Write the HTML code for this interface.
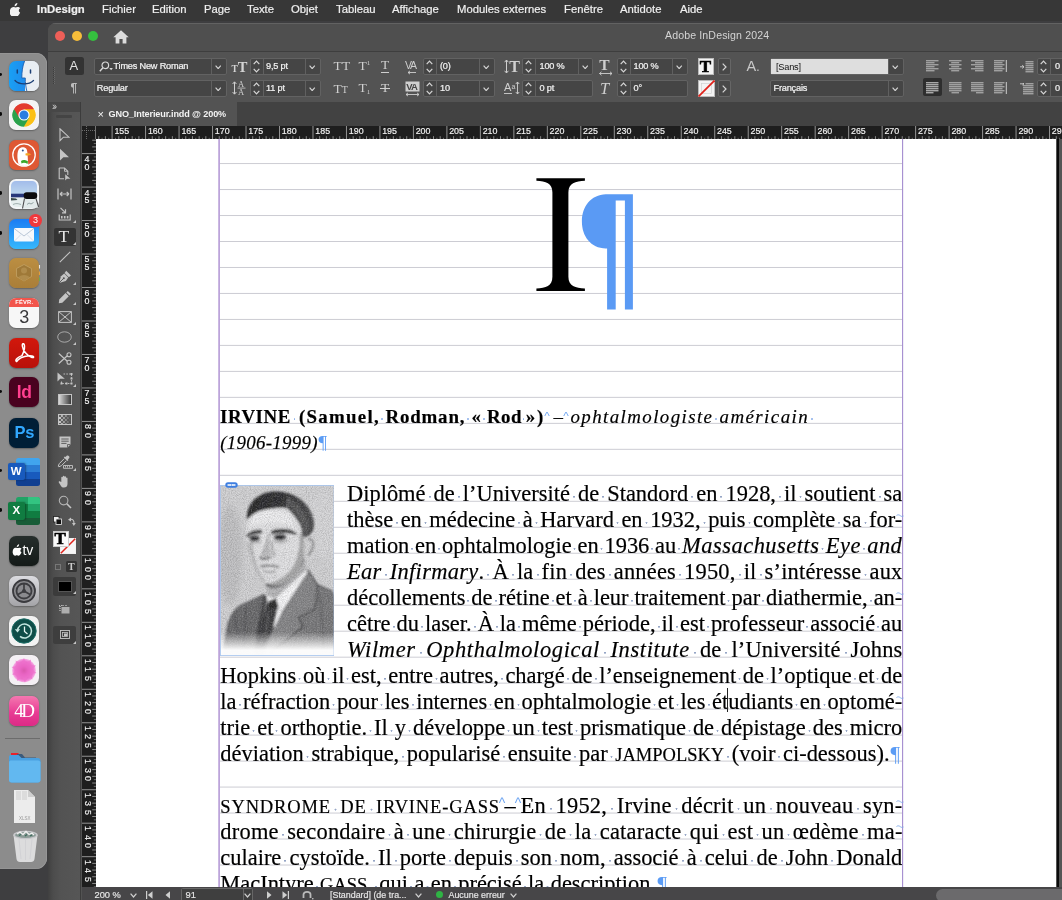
<!DOCTYPE html>
<html lang="fr"><head><meta charset="utf-8"><title>InDesign</title>
<style>
*{box-sizing:border-box;margin:0;padding:0}
html,body{width:1062px;height:900px;overflow:hidden;background:#3e3e40;font-family:"Liberation Sans",sans-serif;}
body{position:relative}
.abs{position:absolute}
/* menubar */
#menubar{position:absolute;left:0;top:0;width:1062px;height:20.6px;background:#373737;color:#f0f0f0;font-size:11.3px;}
#menubar span{position:absolute;top:2.5px;white-space:nowrap;line-height:13px;-webkit-text-stroke:0.2px #f0f0f0}
/* window */
#win{position:absolute;left:48px;top:22.5px;width:1014px;height:878px;background:#535353;border-top-left-radius:8px;overflow:hidden}
#titlebar{position:absolute;left:0;top:0;width:100%;height:29px;background:#4f4f4f;border-bottom:1px solid #3e3e3e;box-shadow:0 0.8px 0 #6a6a6a inset}
.tl{position:absolute;top:7.8px;width:10px;height:10px;border-radius:50%}
#ctrl{position:absolute;left:0;top:29px;width:100%;height:50px;background:#535353}
.fld{position:absolute;height:17px;background:#454545;border:1px solid #626262;border-radius:2px;color:#f2f2f2;font-size:9.2px;line-height:15px;white-space:nowrap;letter-spacing:-0.2px}
.fld i{position:absolute;top:0;width:1px;height:15px;background:#606060}
.fld b{position:absolute;font-weight:normal;top:0.5px;-webkit-text-stroke:0.22px #f2f2f2}
.ui{position:absolute;color:#d8d8d8;white-space:nowrap}
#tabbar{position:absolute;left:34px;top:79px;width:980px;height:24.5px;background:#424242}
#tab{position:absolute;left:0;top:0;width:155px;height:24.5px;background:#535353;color:#f4f4f4;font-weight:bold;font-size:9.1px;line-height:24.5px;letter-spacing:-0.12px}
#tools{position:absolute;left:0;top:79px;width:33px;height:799px;background:linear-gradient(90deg,#404040 0,#4c4c4c 5px,#535353 13px,#565656 100%);border-right:1px solid #3c3c3c}
#toolshead{position:absolute;left:0;top:0;width:32px;height:10px;background:#474747}
/* rulers */
#hr{position:absolute;left:82px;top:125.7px;width:980px;height:13.3px;background:#1e1e1e;overflow:hidden}
#vr{position:absolute;left:82px;top:139px;width:14px;height:748px;background:#1e1e1e;overflow:hidden}
.rl{position:absolute;color:#f4f4f4;font-size:8.9px;line-height:9px;white-space:nowrap;-webkit-text-stroke:0.15px #f4f4f4}
/* page */
#page{position:absolute;left:96px;top:139px;width:960px;height:748px;background:#fff;overflow:hidden}
#status{position:absolute;left:82px;top:886.6px;width:980px;height:14px;background:#474648;color:#e6e6e6;font-size:9.3px;-webkit-text-stroke:0.18px #e6e6e6}
#dock{position:absolute;left:-12px;top:53px;width:58.9px;height:816px;background:#8c8c8c;border-radius:11px;box-shadow:0 0 0 0.6px #9c9c9c inset}
.di{position:absolute;left:9.3px;width:30px;height:30px;box-shadow:0 0.5px 1.5px rgba(0,0,0,0.3)}
#menubar,#dock,#win,#hr,#vr,#page,#status{will-change:transform}

</style></head>
<body>
<div id="menubar">
<svg class="abs" style="left:10px;top:2.5px" width="10.8" height="13.5" viewBox="0 0 12 15"><path fill="#f2f2f2" d="M8.2 0c.1 1-.3 1.900-.8 2.500-.6.700-1.500 1.200-2.300 1.100-.1-.9.300-1.900.8-2.400C6.500.5 7.500 0 8.200 0zM11.300 10.600c-.4 1-.6 1.400-1.200 2.300-.7 1.200-1.800 2.100-2.700 2.100-.9 0-1.200-.6-2.300-.6-1.200 0-1.500.6-2.300.6-.9 0-1.900-1-2.600-2.200C-.9 10.400-.3 6.400 2 5c.8-.5 1.700-.7 2.400-.5.800.2 1.300.5 1.800.5.500 0 1.200-.4 2.200-.6 1-.1 2.300.4 3 1.400-2.300 1.400-1.900 4.100-.1 4.800z"/></svg>
<span style="left:37px;font-weight:bold;font-size:11.3px">InDesign</span>
<span style="left:102px">Fichier</span>
<span style="left:152px">Edition</span>
<span style="left:204px">Page</span>
<span style="left:247px">Texte</span>
<span style="left:291px">Objet</span>
<span style="left:336px">Tableau</span>
<span style="left:392px">Affichage</span>
<span style="left:457px">Modules externes</span>
<span style="left:564px">Fenêtre</span>
<span style="left:620px">Antidote</span>
<span style="left:680px">Aide</span>
</div>
<div id="dock"><div class="abs" style="left:12px;top:-53px;width:0;height:0">
<div class="di" style="top:60.5px;background:linear-gradient(90deg,#19a0f4 0%,#1e8cee 52%,#e9eef3 52%,#dfe6ee 100%);border-radius:7px;;overflow:hidden"><svg width="30" height="30" viewBox="0 0 30 30" class="abs" style="left:0;top:0"><path d="M15.600 0 C13.500 5 12.800 11 12.800 17 H16.300 C16.300 22 16.800 26 17.800 30 H30 V0 Z" fill="#e9eef3"/><path d="M15.600 0 C13.500 5 12.800 11 12.800 17 H16.300 C16.300 22 16.800 26 17.800 30" fill="none" stroke="#1b5fae" stroke-width="0.9"/><path d="M8.300 9 V12 M21.500 9 V12" stroke="#1c3f74" stroke-width="1.500" stroke-linecap="round"/><path d="M6 19.500 C10 24 20 24 24.500 19.500" fill="none" stroke="#1c3f74" stroke-width="1.300" stroke-linecap="round"/></svg></div>
<div class="abs" style="left:-1.5px;top:72.8px;width:3.8px;height:3.6px;border-radius:50%;background:#0a0a0a"></div>
<div class="di" style="top:99.7px;background:#f4f4f4;border-radius:7px;"><svg width="30" height="30" viewBox="0 0 30 30" class="abs" style="left:0;top:0"><circle cx="15" cy="15" r="11.500" fill="#fff"/><path d="M15 15 L5.040 9.250 A11.500 11.500 0 0 1 24.960 9.250 Z" fill="#e33b2e"/><path d="M15 15 L24.960 9.250 A11.500 11.500 0 0 1 15 26.500 Z" fill="#fbc116"/><path d="M15 15 L15 26.500 A11.500 11.500 0 0 1 5.040 9.250 Z" fill="#2ba24c"/><path d="M15 9.250 H24.960 A11.500 11.500 0 0 0 5.040 9.250 L10 17.800 Z" fill="#e33b2e"/><path d="M19.980 17.880 L15 26.500 A11.500 11.500 0 0 0 24.960 9.250 H15 Z" fill="#fbc116"/><path d="M10.020 17.880 L5.040 9.250 A11.500 11.500 0 0 0 15 26.500 L19.980 17.880 Z" fill="#2ba24c"/><circle cx="15" cy="15" r="5.600" fill="#fff"/><circle cx="15" cy="15" r="4.500" fill="#2a7de1"/></svg></div>
<div class="abs" style="left:-1.5px;top:112.1px;width:3.8px;height:3.6px;border-radius:50%;background:#0a0a0a"></div>
<div class="di" style="top:140.0px;background:#de5833;border-radius:7px;"><svg width="30" height="30" viewBox="0 0 30 30" class="abs" style="left:0;top:0"><circle cx="15" cy="15" r="11.200" fill="none" stroke="#fff" stroke-width="1.300"/><path d="M9.500 24 C8 18 8 12 10 9 C12 6.500 16 6.500 17.500 9 C19 12 18.500 20 19.500 25 C16 26.500 12.500 26.300 9.500 24 Z" fill="#fff"/><path d="M16.500 13.500 C19 13 21.500 13.800 22 14.500 C20.500 15.500 18 15.800 16.500 15.300 Z" fill="#f5a623"/><path d="M12 21 C14 19.500 17 20 19 21.500 L18.500 24 C16.500 22.500 14 22.500 12.500 23.500 Z" fill="#3ca82b"/><circle cx="13.800" cy="10.500" r="1" fill="#2d4f8e"/></svg></div>
<div class="di" style="top:179.0px;background:#f4f6f8;border-radius:7px;"><svg width="30" height="30" viewBox="0 0 30 30" class="abs" style="left:0;top:0"><defs><linearGradient id="sky" x1="0" y1="0" x2="0" y2="1"><stop offset="0" stop-color="#a2bcea"/><stop offset="1" stop-color="#bcd6ee"/></linearGradient><clipPath id="pvc"><rect x="2" y="2" width="26" height="26" rx="4.800"/></clipPath></defs><g clip-path="url(#pvc)"><rect x="2" y="2" width="26" height="13" fill="url(#sky)"/><rect x="2" y="14.700" width="26" height="4" fill="#27377a"/><rect x="2" y="18.500" width="26" height="10" fill="#e6eeee"/><path d="M2 19 L7 19.500 L8.500 21 L2 21.500 Z" fill="#3a4a4a"/><path d="M4 25.500 C7 24 9 24.500 12 25.500" stroke="#9aa8a8" stroke-width="0.900" fill="none"/></g><path d="M15.500 19 L13.300 29.700 L29.800 28.500 L27.200 19 Z" fill="#e2eaea"/><path d="M15.500 19.500 L13.500 29.500 M27 19.500 L29.600 28" stroke="#4a4a4c" stroke-width="1.100" fill="none"/><rect x="14.700" y="13.300" width="13.500" height="6.600" rx="3" fill="#0c0c0e"/><path d="M18 25.500 l2 -1.500 l2 1 l2.500 -1.500" stroke="#8a9a9a" stroke-width="0.900" fill="none"/></svg></div>
<div class="abs" style="left:-1.5px;top:191.2px;width:3.8px;height:3.6px;border-radius:50%;background:#0a0a0a"></div>
<div class="di" style="top:218.5px;background:linear-gradient(180deg,#1b7cf3 0%,#36b8fc 100%);border-radius:7px;"><svg width="30" height="30" viewBox="0 0 30 30" class="abs" style="left:0;top:0"><rect x="5" y="9" width="20" height="13.500" rx="1.500" fill="#f6f8fb"/><path d="M5.500 9.800 L15 17 L24.500 9.800" fill="none" stroke="#b9c6d6" stroke-width="1"/><path d="M5.500 22 L12 15.500 M24.500 22 L18 15.500" stroke="#cdd7e3" stroke-width="0.8"/></svg></div>
<div class="abs" style="left:29.200px;top:213.900px;width:12.800px;height:12.800px;border-radius:50%;background:#f0383c;color:#fff;font-size:9px;line-height:12.800px;text-align:center">3</div>
<div class="abs" style="left:-1.5px;top:231.2px;width:3.8px;height:3.6px;border-radius:50%;background:#0a0a0a"></div>
<div class="di" style="top:258.0px;background:linear-gradient(180deg,#bb8e42,#aa7e38);border-radius:7px;"><svg width="32" height="30" viewBox="0 0 32 30" class="abs" style="left:0;top:0;overflow:visible"><path d="M15 6.500 L22.500 10.500 V18.500 L15 23 L7.500 18.500 V10.500 Z" fill="#9d7838" stroke="#c4a468" stroke-width="0.8" opacity="0.9"/><circle cx="15" cy="12.500" r="3" fill="#b08c4c"/><path d="M9.500 19.500 C10.500 16 19.500 16 20.500 19.500 L15 23 Z" fill="#b08c4c"/><path d="M30.500 7 v3.500" stroke="#e8e8e8" stroke-width="1.100"/><path d="M30.500 13.500 v3.500" stroke="#e0a040" stroke-width="1.100"/><path d="M30.500 19.500 v3.500" stroke="#70a850" stroke-width="1.100"/></svg></div>
<div class="di" style="top:298.4px;background:#f7f7f7;border-radius:7px;"><div class="abs" style="left:0;top:0;width:30px;height:9px;background:#f2554c;border-radius:7px 7px 0 0;color:#fff;font-size:5.800px;font-weight:bold;line-height:9.500px;text-align:center;letter-spacing:0.2px">FÉVR.</div><div class="abs" style="left:0;top:8.500px;width:30px;color:#3a3a3c;font-size:18px;line-height:21px;text-align:center">3</div></div>
<div class="di" style="top:338.0px;background:linear-gradient(180deg,#d2180c,#b8100a);border-radius:7px;"><svg width="30" height="30" viewBox="0 0 30 30" class="abs" style="left:0;top:0"><path d="M7.200 23.200 C5.800 21.500 9.500 18.800 13 17.600 C15.200 13 16.300 9 15.200 6.500 C14.500 5 13 5.600 13.300 7.800 C14 12.300 18 17 22.500 19.300 C24.800 20.400 25.600 18.300 23 17.900 C19 17.300 12 18.800 9.200 21.800 C8.300 22.800 7.800 23.900 7.200 23.200 Z" fill="none" stroke="#fff" stroke-width="1.500" stroke-linejoin="round"/></svg></div>
<div class="di" style="top:377.3px;background:#49021f;border-radius:7px;"><div class="abs" style="left:0;top:0;width:30px;line-height:30px;text-align:center;color:#ff3f8f;font-weight:bold;font-size:17.500px;letter-spacing:-0.3px">Id</div></div>
<div class="abs" style="left:-1.5px;top:389.6px;width:3.8px;height:3.6px;border-radius:50%;background:#0a0a0a"></div>
<div class="di" style="top:417.5px;background:#001e36;border-radius:7px;"><div class="abs" style="left:0;top:0;width:30px;line-height:29px;text-align:center;color:#31a8ff;font-weight:bold;font-size:16.500px;letter-spacing:-0.3px">Ps</div></div>
<div class="abs" style="left:16px;top:457.500px;width:24px;height:28px;border-radius:2.500px;overflow:hidden;background:linear-gradient(180deg,#41a5ee 0 25%,#2b7cd3 25% 50%,#185abd 50% 75%,#103f91 75% 100%)"></div>
<div class="abs" style="left:7.800px;top:462.800px;width:17px;height:17.500px;border-radius:2px;background:#185abd;color:#fff;font-weight:bold;font-size:11.500px;line-height:17.500px;text-align:center;box-shadow:1px 0 2px rgba(0,0,0,0.35)">W</div>
<div class="abs" style="left:-1.5px;top:468.9px;width:3.8px;height:3.6px;border-radius:50%;background:#0a0a0a"></div>
<div class="abs" style="left:16px;top:497px;width:24px;height:28px;border-radius:2.500px;overflow:hidden;background:linear-gradient(180deg,#21a366 0 25%,#21a366 25% 50%,#107c41 50% 75%,#185c37 75% 100%)"><div class="abs" style="left:12px;top:0;width:12px;height:7px;background:#33c481"></div><div class="abs" style="left:12px;top:7px;width:12px;height:7px;background:#21a366"></div><div class="abs" style="left:0;top:7px;width:12px;height:7px;background:#107c41"></div></div>
<div class="abs" style="left:7.800px;top:502.300px;width:17px;height:17.500px;border-radius:2px;background:#107c41;color:#fff;font-weight:bold;font-size:11.500px;line-height:17.500px;text-align:center;box-shadow:1px 0 2px rgba(0,0,0,0.35)">X</div>
<div class="abs" style="left:-1.5px;top:508.2px;width:3.8px;height:3.6px;border-radius:50%;background:#0a0a0a"></div>
<div class="di" style="top:536.0px;background:linear-gradient(180deg,#262e2c,#141a18);border-radius:7px;"><svg width="30" height="30" viewBox="0 0 30 30" class="abs" style="left:0;top:0"><g transform="translate(3.900,8.300) scale(0.760)"><path fill="#fff" d="M8.200 0c.1 1-.3 1.900-.8 2.500-.6.700-1.500 1.200-2.300 1.100-.1-.9.300-1.900.8-2.400C6.500.5 7.500 0 8.200 0zM11.300 10.600c-.4 1-.6 1.400-1.200 2.300-.7 1.200-1.800 2.100-2.700 2.100-.9 0-1.200-.6-2.300-.6-1.200 0-1.500.6-2.300.6-.9 0-1.900-1-2.600-2.200C-.9 10.400-.3 6.400 2 5c.8-.5 1.700-.7 2.400-.5.800.2 1.300.5 1.800.5.500 0 1.200-.4 2.200-.6 1-.1 2.300.4 3 1.400-2.300 1.400-1.900 4.100-.1 4.800z"/></g><text x="13.600" y="19.400" font-family="Liberation Sans" font-size="14" fill="#fff" letter-spacing="-0.2">tv</text></svg></div>
<div class="di" style="top:575.6px;background:linear-gradient(180deg,#dcdce0,#a4a4a8);border-radius:7px;"><svg width="30" height="30" viewBox="0 0 30 30" class="abs" style="left:0;top:0"><circle cx="15" cy="15" r="11" fill="#8a8a8e" stroke="#3a3a3e" stroke-width="1.800"/><circle cx="15" cy="15" r="7.500" fill="none" stroke="#3c3c40" stroke-width="1.800"/><path d="M15 15 L15 7.500 M15 15 L8.500 18.800 M15 15 L21.500 18.800" stroke="#3c3c40" stroke-width="1.700"/><circle cx="15" cy="15" r="2" fill="#3c3c40"/></svg></div>
<div class="di" style="top:615.6px;background:#f2f2f2;border-radius:7px;"><svg width="30" height="30" viewBox="0 0 30 30" class="abs" style="left:0;top:0"><circle cx="15" cy="15" r="12.200" fill="#0f4d48"/><circle cx="15" cy="15" r="12.200" fill="none" stroke="#1d6f68" stroke-width="1"/><path d="M8.500 15 A7 7 0 1 1 11 20.400" fill="none" stroke="#c4e6e0" stroke-width="1.500"/><path d="M5.800 13.300 L8.500 16.500 L11.200 13.300 Z" fill="#c4e6e0"/><path d="M15.500 10.500 V15.500 L18.500 18" fill="none" stroke="#e8f6f2" stroke-width="1.300"/></svg></div>
<div class="di" style="top:655.0px;background:#f4f0f4;border-radius:7px;"><svg width="30" height="30" viewBox="0 0 30 30" class="abs" style="left:0;top:0"><defs><radialGradient id="fl"><stop offset="0" stop-color="#a82068"/><stop offset="0.350" stop-color="#dc48b0"/><stop offset="0.800" stop-color="#ee78d0"/><stop offset="1" stop-color="#f6b0e6"/></radialGradient></defs><circle cx="15" cy="15.500" r="11.800" fill="url(#fl)"/><path d="M15 3 L17 8 L22 4.500 L21.500 10 L27 10.500 L23 14.500 L27.500 18 L22 19 L23.500 24.500 L18.500 22 L16 27.500 L13 22.500 L8 26 L8.500 20.500 L3 19.500 L7 15.500 L2.500 12 L8 11 L6.500 5.500 L12 8 Z" fill="#ee70cc" opacity="0.7"/></svg></div>
<div class="di" style="top:695.6px;background:linear-gradient(180deg,#f478b0 0%,#e83c94 55%,#dc2a86 100%);border-radius:7px;"><div class="abs" style="left:0;top:0;width:30px;line-height:29px;text-align:center;color:#fff;font-family:'Liberation Serif',serif;font-size:19px;letter-spacing:-2.500px;text-indent:-2px">4D</div></div>
<div class="abs" style="left:4.500px;top:738px;width:35px;height:1px;background:#6c6c6c"></div>
<svg class="abs" style="left:7.500px;top:748px" width="34" height="37" viewBox="0 0 34 37"><path d="M3 5 H10 L13 8 H3 Z" fill="#e8202a"/><path d="M9 6 L14 6 L17 9.500 H28 V12 H9 Z" fill="#3c5a7a"/><path d="M1 9 C1 7.500 2 7 3 7 H10.500 L13.500 10 H30 C31.500 10 32.500 11 32.500 12.500 V32 C32.500 33.500 31.500 34.500 30 34.500 H3.500 C2 34.500 1 33.500 1 32 Z" fill="#4aa0e0"/><path d="M1 14.500 C1 13 2 12.500 3.500 12.500 H30 C31.500 12.500 32.500 13.500 32.500 14.500 V32 C32.500 33.500 31.500 34.500 30 34.500 H3.500 C2 34.500 1 33.500 1 32 Z" fill="#62b8f0"/></svg>
<svg class="abs" style="left:12.500px;top:788.500px" width="23" height="35" viewBox="0 0 23 35"><path d="M1 1 H15 L22 8 V34 H1 Z" fill="#ececec"/><path d="M15 1 V8 H22 Z" fill="#cfcfcf"/><path d="M3 2 h5 v9 h-5z M9 2 h5 v9 h-5z" fill="#dcdcdc"/><text x="6" y="30.500" font-family="Liberation Sans" font-size="4.500" fill="#9a9a9a">XLSX</text></svg>
<svg class="abs" style="left:10.500px;top:828px" width="29" height="35" viewBox="0 0 29 35"><path d="M2.500 7 L5.500 31 C5.800 33 7 34 9 34 H20 C22 34 23.200 33 23.500 31 L26.500 7 Z" fill="#e4e4e6" opacity="0.900"/><ellipse cx="14.500" cy="7" rx="12.300" ry="4.200" fill="#c8c8cc"/><ellipse cx="14.500" cy="7" rx="10.500" ry="3" fill="#8a9a96"/><path d="M6 6 l3 -2 l3 2.500 l3 -3 l3 3 l3 -1.500 l2 2" stroke="#f0f0f0" stroke-width="1.300" fill="none"/><path d="M8 7.500 l2 -1 M14 8 l2 -1.500 M19 8 l2 -1" stroke="#3a6a5a" stroke-width="1.200"/><path d="M8 11 L10 31 M14.500 11.500 V32 M21 11 L19 31" stroke="#d0d0d4" stroke-width="0.900"/></svg>
</div></div>
<div id="win">
<div id="titlebar">
<div class="tl" style="left:7.2px;background:#ee5f58"></div>
<div class="tl" style="left:23.8px;background:#f6bd3a"></div>
<div class="tl" style="left:40.3px;background:#35c03f"></div>
<svg class="abs" style="left:65px;top:7.0px" width="16" height="14" viewBox="0 0 16 14"><path fill="#dcdcdc" d="M8 0.3 L0.3 7.2 H2.6 V13.5 H6.4 V9 H9.6 V13.5 H13.4 V7.2 H15.7 Z"/></svg>
<div class="ui" style="left:617px;top:5.5px;font-size:10.6px;line-height:13px;color:#d4d4d4;letter-spacing:0.12px">Adobe InDesign 2024</div>
</div>
<div id="ctrl"></div>
<div class="abs" style="left:4.5px;top:43.5px;width:2px;height:17px;border-left:1px dotted #3d3d3d;border-right:1px dotted #6a6a6a"></div>
<div class="abs" style="left:17px;top:34.0px;width:18.5px;height:18px;background:#333;border-radius:2.5px"></div>
<div class="ui" style="left:21.599999999999994px;top:36.0px;font-size:13px;line-height:14px;color:#e0e0e0">A</div>
<div class="ui" style="left:22.5px;top:57.5px;font-size:12px;line-height:14px;color:#bdbdbd;font-weight:bold">¶</div>
<div class="fld" style="left:45.5px;top:34.5px;width:133.0px;background:#454545;color:#f2f2f2"><i style="left:116.5px"></i><b style="left:19.0px">Times New Roman</b><svg class="abs" style="left:4px;top:2.5px" width="15" height="11" viewBox="0 0 15 11"><circle cx="6.3" cy="4.3" r="3.3" fill="none" stroke="#d8d8d8" stroke-width="1.2"/><path d="M3.9 6.8 L0.8 10.2" stroke="#d8d8d8" stroke-width="1.4" fill="none"/><path d="M10.3 7 h3.6 l-1.8 2.2z" fill="#d8d8d8"/></svg></div>
<svg class="abs" style="left:167.3px;top:41.7px" width="6.4" height="4.6" viewBox="0 0 6.4 4.6"><path d="M0.6 0.6 L3.2 3.6 L5.800000000000001 0.6" fill="none" stroke="#d6d6d6" stroke-width="1.15"/></svg>
<div class="fld" style="left:45.5px;top:56.5px;width:133.0px;background:#454545;color:#f2f2f2"><i style="left:116.5px"></i><b style="left:2.3px">Regular</b></div>
<svg class="abs" style="left:167.3px;top:63.7px" width="6.4" height="4.6" viewBox="0 0 6.4 4.6"><path d="M0.6 0.6 L3.2 3.6 L5.800000000000001 0.6" fill="none" stroke="#d6d6d6" stroke-width="1.15"/></svg>
<div class="ui" style="left:183.5px;top:34.5px;font-family:'Liberation Serif',serif;font-weight:bold;color:#d4d4d4;line-height:18px"><span style="font-size:9.500px">T</span><span style="font-size:14.500px">T</span></div>
<div class="fld" style="left:202.0px;top:34.5px;width:70.5px;background:#454545;color:#f2f2f2"><i style="left:12px"></i><i style="left:54.0px"></i><b style="left:15.0px">9,5 pt</b></div>
<svg class="abs" style="left:205.0px;top:36.5px" width="7" height="13" viewBox="0 0 7 13"><path d="M0.7 4.2 L3.5 1.2 L6.3 4.2 M0.7 8.8 L3.5 11.8 L6.3 8.8" fill="none" stroke="#d6d6d6" stroke-width="1.2"/></svg>
<svg class="abs" style="left:261.3px;top:41.7px" width="6.4" height="4.6" viewBox="0 0 6.4 4.6"><path d="M0.6 0.6 L3.2 3.6 L5.800000000000001 0.6" fill="none" stroke="#d6d6d6" stroke-width="1.15"/></svg>
<svg class="abs" style="left:184px;top:57.0px" width="15" height="16" viewBox="0 0 15 16"><path d="M2.5 2 V14 M0.6 4 L2.5 1.8 L4.4 4 M0.6 12 L2.5 14.2 L4.4 12" fill="none" stroke="#cfcfcf" stroke-width="1"/><text x="6" y="7.3" font-family="Liberation Serif" font-size="8.5" fill="#cfcfcf">A</text><text x="6" y="15.2" font-family="Liberation Serif" font-size="8.5" fill="#cfcfcf">A</text><path d="M5.5 8.1 H13.5" stroke="#cfcfcf" stroke-width="0.8"/></svg>
<div class="fld" style="left:202.0px;top:56.5px;width:70.5px;background:#454545;color:#f2f2f2"><i style="left:12px"></i><i style="left:54.0px"></i><b style="left:15.0px">11 pt</b></div>
<svg class="abs" style="left:205.0px;top:58.5px" width="7" height="13" viewBox="0 0 7 13"><path d="M0.7 4.2 L3.5 1.2 L6.3 4.2 M0.7 8.8 L3.5 11.8 L6.3 8.8" fill="none" stroke="#d6d6d6" stroke-width="1.2"/></svg>
<svg class="abs" style="left:261.3px;top:63.7px" width="6.4" height="4.6" viewBox="0 0 6.4 4.6"><path d="M0.6 0.6 L3.2 3.6 L5.800000000000001 0.6" fill="none" stroke="#d6d6d6" stroke-width="1.15"/></svg>
<div class="ui" style="left:285.5px;top:35.0px;font-family:'Liberation Serif',serif;color:#cfcfcf;line-height:16px;font-size:13.5px;letter-spacing:0.3px">TT</div>
<div class="ui" style="left:310.5px;top:35.0px;font-family:'Liberation Serif',serif;color:#cfcfcf;line-height:16px;font-size:13.5px">T<span style="font-size:7px;position:relative;top:-5px">1</span></div>
<div class="ui" style="left:333px;top:35.0px;font-family:'Liberation Serif',serif;color:#cfcfcf;line-height:16px;font-size:13.5px;border-bottom:1px solid #cfcfcf;line-height:14px">T</div>
<div class="ui" style="left:285.5px;top:57.0px;font-family:'Liberation Serif',serif;color:#cfcfcf;line-height:16px"><span style="font-size:13.5px">T</span><span style="font-size:10px">T</span></div>
<div class="ui" style="left:310.5px;top:57.0px;font-family:'Liberation Serif',serif;color:#cfcfcf;line-height:16px;font-size:13.5px">T<span style="font-size:7px;position:relative;top:2px">1</span></div>
<div class="ui" style="left:333px;top:57.0px;font-family:'Liberation Serif',serif;color:#cfcfcf;line-height:16px;font-size:13.5px">T</div>
<div class="abs" style="left:332px;top:65.0px;width:10px;height:1px;background:#cfcfcf"></div>
<svg class="abs" style="left:356.5px;top:35.5px" width="16" height="16" viewBox="0 0 16 16"><text x="0" y="10" font-family="Liberation Sans" font-size="10.5" fill="#cfcfcf" letter-spacing="-1.3">VA</text><path d="M3 13.5 H11 M3 13.5 l2 -1.6 M3 13.5 l2 1.6" stroke="#cfcfcf" stroke-width="0.9" fill="none"/></svg>
<div class="fld" style="left:374.5px;top:34.5px;width:72.1px;background:#454545;color:#f2f2f2"><i style="left:12px"></i><i style="left:55.6px"></i><b style="left:16.5px">(0)</b></div>
<svg class="abs" style="left:377.5px;top:36.5px" width="7" height="13" viewBox="0 0 7 13"><path d="M0.7 4.2 L3.5 1.2 L6.3 4.2 M0.7 8.8 L3.5 11.8 L6.3 8.8" fill="none" stroke="#d6d6d6" stroke-width="1.2"/></svg>
<svg class="abs" style="left:435.4px;top:41.7px" width="6.4" height="4.6" viewBox="0 0 6.4 4.6"><path d="M0.6 0.6 L3.2 3.6 L5.800000000000001 0.6" fill="none" stroke="#d6d6d6" stroke-width="1.15"/></svg>
<svg class="abs" style="left:356.5px;top:57.5px" width="16" height="16" viewBox="0 0 16 16"><rect x="0.5" y="0.5" width="14" height="10" fill="#cfcfcf"/><text x="1.2" y="9.3" font-family="Liberation Sans" font-weight="bold" font-size="9.5" fill="#454545" letter-spacing="-0.8">VA</text><path d="M1 13.5 H14 M1 13.5 l2 -1.6 M1 13.5 l2 1.6 M14 13.5 l-2 -1.6 M14 13.5 l-2 1.6" stroke="#cfcfcf" stroke-width="0.9" fill="none"/></svg>
<div class="fld" style="left:374.5px;top:56.5px;width:72.1px;background:#454545;color:#f2f2f2"><i style="left:12px"></i><i style="left:55.6px"></i><b style="left:16.5px">10</b></div>
<svg class="abs" style="left:377.5px;top:58.5px" width="7" height="13" viewBox="0 0 7 13"><path d="M0.7 4.2 L3.5 1.2 L6.3 4.2 M0.7 8.8 L3.5 11.8 L6.3 8.8" fill="none" stroke="#d6d6d6" stroke-width="1.2"/></svg>
<svg class="abs" style="left:435.4px;top:63.7px" width="6.4" height="4.6" viewBox="0 0 6.4 4.6"><path d="M0.6 0.6 L3.2 3.6 L5.800000000000001 0.6" fill="none" stroke="#d6d6d6" stroke-width="1.15"/></svg>
<svg class="abs" style="left:456px;top:35.0px" width="17" height="17" viewBox="0 0 17 17"><path d="M2.5 2 V15 M0.6 4.2 L2.5 2 L4.4 4.2 M0.6 12.8 L2.5 15 L4.4 12.8" fill="none" stroke="#cfcfcf" stroke-width="1"/><text x="5.2" y="14" font-family="Liberation Serif" font-weight="bold" font-size="16" fill="#cfcfcf">T</text></svg>
<div class="fld" style="left:473.8px;top:34.5px;width:71.5px;background:#454545;color:#f2f2f2"><i style="left:12px"></i><i style="left:55.0px"></i><b style="left:16.7px">100 %</b></div>
<svg class="abs" style="left:476.8px;top:36.5px" width="7" height="13" viewBox="0 0 7 13"><path d="M0.7 4.2 L3.5 1.2 L6.3 4.2 M0.7 8.8 L3.5 11.8 L6.3 8.8" fill="none" stroke="#d6d6d6" stroke-width="1.2"/></svg>
<svg class="abs" style="left:534.1px;top:41.7px" width="6.4" height="4.6" viewBox="0 0 6.4 4.6"><path d="M0.6 0.6 L3.2 3.6 L5.800000000000001 0.6" fill="none" stroke="#d6d6d6" stroke-width="1.15"/></svg>
<svg class="abs" style="left:456px;top:57.0px" width="17" height="17" viewBox="0 0 17 17"><text x="0" y="11" font-family="Liberation Sans" font-size="11" fill="#cfcfcf">A</text><path d="M0 13.5 H8" stroke="#cfcfcf" stroke-width="0.9"/><text x="7.6" y="9" font-family="Liberation Sans" font-size="7" fill="#cfcfcf">a</text><path d="M13.5 2 V14 M11.8 4 L13.5 2 L15.2 4 M11.8 12 L13.5 14 L15.2 12" fill="none" stroke="#cfcfcf" stroke-width="0.9"/></svg>
<div class="fld" style="left:473.8px;top:56.5px;width:71.5px;background:#454545;color:#f2f2f2"><i style="left:12px"></i><b style="left:16.7px">0 pt</b></div>
<svg class="abs" style="left:476.8px;top:58.5px" width="7" height="13" viewBox="0 0 7 13"><path d="M0.7 4.2 L3.5 1.2 L6.3 4.2 M0.7 8.8 L3.5 11.8 L6.3 8.8" fill="none" stroke="#d6d6d6" stroke-width="1.2"/></svg>
<svg class="abs" style="left:549.5px;top:34.5px" width="16" height="18" viewBox="0 0 16 18"><text x="1.2" y="12" font-family="Liberation Serif" font-weight="bold" font-size="15.5" fill="#cfcfcf">T</text><path d="M1.5 15.5 H14 M1.5 15.5 l2 -1.7 M1.5 15.5 l2 1.7 M14 15.5 l-2 -1.7 M14 15.5 l-2 1.7" stroke="#cfcfcf" stroke-width="0.9" fill="none"/></svg>
<div class="fld" style="left:568.5px;top:34.5px;width:71.0px;background:#454545;color:#f2f2f2"><i style="left:12px"></i><i style="left:54.5px"></i><b style="left:16.0px">100 %</b></div>
<svg class="abs" style="left:571.5px;top:36.5px" width="7" height="13" viewBox="0 0 7 13"><path d="M0.7 4.2 L3.5 1.2 L6.3 4.2 M0.7 8.8 L3.5 11.8 L6.3 8.8" fill="none" stroke="#d6d6d6" stroke-width="1.2"/></svg>
<svg class="abs" style="left:628.3px;top:41.7px" width="6.4" height="4.6" viewBox="0 0 6.4 4.6"><path d="M0.6 0.6 L3.2 3.6 L5.800000000000001 0.6" fill="none" stroke="#d6d6d6" stroke-width="1.15"/></svg>
<div class="ui" style="left:552px;top:56.5px;font-family:'Liberation Serif',serif;font-style:italic;font-size:16.5px;line-height:17px;color:#cfcfcf">T</div>
<div class="fld" style="left:568.5px;top:56.5px;width:71.0px;background:#454545;color:#f2f2f2"><i style="left:12px"></i><b style="left:16.0px">0°</b></div>
<svg class="abs" style="left:571.5px;top:58.5px" width="7" height="13" viewBox="0 0 7 13"><path d="M0.7 4.2 L3.5 1.2 L6.3 4.2 M0.7 8.8 L3.5 11.8 L6.3 8.8" fill="none" stroke="#d6d6d6" stroke-width="1.2"/></svg>
<div class="abs" style="left:649.5px;top:35.0px;width:16.5px;height:16.5px;background:#f4f4f4;border:1px solid #bbb"></div>
<div class="ui" style="left:651.8px;top:34.5px;font-family:'Liberation Serif',serif;font-weight:bold;font-size:17px;line-height:17px;color:#000;-webkit-text-stroke:0.7px #000">T</div>
<div class="abs" style="left:669.5px;top:35.0px;width:13.5px;height:16.5px;background:#484848;border:1px solid #666;border-radius:2px"></div>
<svg class="abs" style="left:674px;top:39.5px" width="5" height="8" viewBox="0 0 5 8"><path d="M0.7 0.7 L4 4 L0.7 7.3" fill="none" stroke="#d6d6d6" stroke-width="1.2"/></svg>
<svg class="abs" style="left:649.5px;top:56.5px" width="17" height="17" viewBox="0 0 17 17"><rect x="0.5" y="0.5" width="16" height="16" fill="#f4f4f4" stroke="#bbb"/><rect x="3.5" y="3.5" width="10" height="10" fill="#f4f4f4" stroke="#ccc" stroke-width="0.6"/><path d="M0.5 16.5 L16.5 0.5" stroke="#e0221b" stroke-width="1.8"/></svg>
<div class="abs" style="left:669.5px;top:57.0px;width:13.5px;height:16.5px;background:#484848;border:1px solid #666;border-radius:2px"></div>
<svg class="abs" style="left:674px;top:61.5px" width="5" height="8" viewBox="0 0 5 8"><path d="M0.7 0.7 L4 4 L0.7 7.3" fill="none" stroke="#d6d6d6" stroke-width="1.2"/></svg>
<div class="ui" style="left:698.5px;top:34.5px;font-size:14.5px;line-height:17px;color:#c8c8c8">A<span style="font-size:12px">.</span></div>
<div class="fld" style="left:722.0px;top:34.5px;width:133.5px;background:#454545;color:#f2f2f2"><i style="left:117.0px"></i><div class="abs" style="left:0;top:0;width:116.5px;height:15px;background:#dedede;color:#111;padding-left:5px;line-height:16px">[Sans]</div></div>
<svg class="abs" style="left:844.3px;top:41.7px" width="6.4" height="4.6" viewBox="0 0 6.4 4.6"><path d="M0.6 0.6 L3.2 3.6 L5.800000000000001 0.6" fill="none" stroke="#d6d6d6" stroke-width="1.15"/></svg>
<div class="fld" style="left:722.0px;top:56.5px;width:133.5px;background:#454545;color:#f2f2f2"><i style="left:117.0px"></i><b style="left:2.5px">Français</b></div>
<svg class="abs" style="left:844.3px;top:63.7px" width="6.4" height="4.6" viewBox="0 0 6.4 4.6"><path d="M0.6 0.6 L3.2 3.6 L5.800000000000001 0.6" fill="none" stroke="#d6d6d6" stroke-width="1.15"/></svg>
<svg class="abs" style="left:878.0px;top:36.5px" width="13" height="12" viewBox="0 0 13 12"><path d="M0.0 0.8 h12.5 M0.0 2.8 h8.5 M0.0 4.8 h12.5 M0.0 6.8 h8.5 M0.0 8.8 h12.5 M0.0 10.8 h8.5" stroke="#cfcfcf" stroke-width="0.9" fill="none"/></svg>
<svg class="abs" style="left:900.5px;top:36.5px" width="13" height="12" viewBox="0 0 13 12"><path d="M0.0 0.8 h12.5 M2.2 2.8 h8.0 M0.0 4.8 h12.5 M2.2 6.8 h8.0 M0.0 8.8 h12.5 M2.2 10.8 h8.0" stroke="#cfcfcf" stroke-width="0.9" fill="none"/></svg>
<svg class="abs" style="left:923.0px;top:36.5px" width="13" height="12" viewBox="0 0 13 12"><path d="M0.0 0.8 h12.5 M4.0 2.8 h8.5 M0.0 4.8 h12.5 M4.0 6.8 h8.5 M0.0 8.8 h12.5 M4.0 10.8 h8.5" stroke="#cfcfcf" stroke-width="0.9" fill="none"/></svg>
<svg class="abs" style="left:945.5px;top:36.5px" width="13" height="12" viewBox="0 0 13 12"><path d="M0.0 0.8 h10.5 M0.0 2.8 h8.5 M0.0 4.8 h10.5 M0.0 6.8 h8.5 M0.0 8.8 h10.5 M0.0 10.8 h8.5" stroke="#cfcfcf" stroke-width="0.9" fill="none"/><path d="M12.3 0 V12" stroke="#cfcfcf" stroke-width="1"/></svg>
<div class="abs" style="left:875.0px;top:55.2px;width:18.5px;height:18px;background:#2e2e2e;border-radius:2px"></div><svg class="abs" style="left:878.0px;top:58.7px" width="13" height="12" viewBox="0 0 13 12"><path d="M0.0 0.8 h12.5 M0.0 2.8 h12.5 M0.0 4.8 h12.5 M0.0 6.8 h12.5 M0.0 8.8 h12.5 M0.0 10.8 h7.5" stroke="#f0f0f0" stroke-width="0.9" fill="none"/></svg>
<svg class="abs" style="left:900.5px;top:58.7px" width="13" height="12" viewBox="0 0 13 12"><path d="M0.0 0.8 h12.5 M0.0 2.8 h12.5 M0.0 4.8 h12.5 M0.0 6.8 h12.5 M0.0 8.8 h12.5 M2.5 10.8 h7.5" stroke="#cfcfcf" stroke-width="0.9" fill="none"/></svg>
<svg class="abs" style="left:923.0px;top:58.7px" width="13" height="12" viewBox="0 0 13 12"><path d="M0.0 0.8 h12.5 M0.0 2.8 h12.5 M0.0 4.8 h12.5 M0.0 6.8 h12.5 M0.0 8.8 h12.5 M5.0 10.8 h7.5" stroke="#cfcfcf" stroke-width="0.9" fill="none"/></svg>
<svg class="abs" style="left:945.5px;top:58.7px" width="13" height="12" viewBox="0 0 13 12"><path d="M0.0 0.8 h10.5 M0.0 2.8 h8.5 M0.0 4.8 h10.5 M0.0 6.8 h8.5 M0.0 8.8 h10.5 M0.0 10.8 h8.5" stroke="#cfcfcf" stroke-width="0.9" fill="none"/><path d="M12.3 0 V12" stroke="#cfcfcf" stroke-width="1"/></svg>
<svg class="abs" style="left:971.5px;top:37.5px" width="14" height="12" viewBox="0 0 14 12"><path d="M5.5 0.8 h8 M5.5 2.8 h8 M5.5 4.800 h8 M5.5 6.800 h8 M5.5 8.800 h8 M5.5 10.8 h8" stroke="#cfcfcf" stroke-width="0.9"/><path d="M0 5.8 h4 M4 5.8 l-1.8 -1.6 M4 5.8 l-1.8 1.6" stroke="#cfcfcf" stroke-width="0.9" fill="none"/></svg>
<svg class="abs" style="left:971.5px;top:59.5px" width="14" height="12" viewBox="0 0 14 12"><path d="M5.5 0.8 h8 M3 2.8 h10.5 M3 4.800 h10.5 M3 6.800 h10.5 M3 8.800 h10.5 M3 10.8 h10.5" stroke="#cfcfcf" stroke-width="0.9"/><path d="M0 0.8 h4 M4 0.8 l-1.6 -1.3 M4 0.8 l-1.6 1.3" stroke="#cfcfcf" stroke-width="0.9" fill="none"/></svg>
<div class="fld" style="left:989.0px;top:34.5px;width:38.0px;background:#454545;color:#f2f2f2"><i style="left:12px"></i><b style="left:17.0px">0</b></div>
<svg class="abs" style="left:992.0px;top:36.5px" width="7" height="13" viewBox="0 0 7 13"><path d="M0.7 4.2 L3.5 1.2 L6.3 4.2 M0.7 8.8 L3.5 11.8 L6.3 8.8" fill="none" stroke="#d6d6d6" stroke-width="1.2"/></svg>
<div class="fld" style="left:989.0px;top:56.5px;width:38.0px;background:#454545;color:#f2f2f2"><i style="left:12px"></i><b style="left:17.0px">0</b></div>
<svg class="abs" style="left:992.0px;top:58.5px" width="7" height="13" viewBox="0 0 7 13"><path d="M0.7 4.2 L3.5 1.2 L6.3 4.2 M0.7 8.8 L3.5 11.8 L6.3 8.8" fill="none" stroke="#d6d6d6" stroke-width="1.2"/></svg>
<div id="tabbar"><div id="tab"><span style="position:absolute;left:15.6px;font-weight:normal;font-size:11px;top:-0.5px">×</span><span style="position:absolute;left:26.5px">GNO_Interieur.indd @ 200%</span></div></div>
<!--TOOLS-->
<div id="tools"><div id="toolshead"></div></div>
<div class="ui" style="left:4px;top:78.5px;font-size:10px;line-height:9px;color:#d0d0d0;letter-spacing:-1.5px">&#8250;&#8250;</div>
<div class="abs" style="left:8px;top:92.0px;width:16px;height:2.5px;background:#444;border-radius:1px"></div>
<svg class="abs" style="left:11.0px;top:105.0px" width="11" height="14" viewBox="0 0 11 14"><path d="M1 0.8 V12.6 L4.4 9.2 H10 Z" fill="none" stroke="#c4c4c4" stroke-width="1.1" stroke-linejoin="miter"/></svg>
<svg class="abs" style="left:11.0px;top:124.5px" width="11" height="14" viewBox="0 0 11 14"><path d="M1 0.8 V12.6 L4.4 9.2 H10 Z" fill="#c4c4c4"/></svg>
<svg class="abs" style="left:10.0px;top:143.5px" width="13" height="14" viewBox="0 0 13 14"><path d="M1.2 1 H6.5 L9.8 4.3 V8 M1.2 1 V11.8 H6" fill="none" stroke="#c4c4c4" stroke-width="1.1"/><path d="M6.5 1 V4.3 H9.8" fill="none" stroke="#c4c4c4" stroke-width="0.9"/><path d="M7.2 7.2 V13.6 L9 11.8 H12.4 Z" fill="#c4c4c4"/></svg>
<svg class="abs" style="left:9.0px;top:165.0px" width="15" height="12" viewBox="0 0 15 12"><path d="M1 0.5 V11.5 M14 0.5 V11.5 M3 6 H12 M3 6 l2.3 -2 M3 6 l2.300 2 M12 6 l-2.3 -2 M12 6 l-2.300 2" fill="none" stroke="#c4c4c4" stroke-width="1.2"/></svg>
<svg class="abs" style="left:9.5px;top:184.0px" width="14" height="14" viewBox="0 0 14 14"><path d="M1.2 7.5 V13 H12.2 V7.5" fill="none" stroke="#c4c4c4" stroke-width="1.1"/><path d="M3 9 h1.600 v2.4 h-1.600z M5.900 9 h1.600 v2.4 h-1.600z M8.800 9 h1.600 v2.4 h-1.600z" fill="#c4c4c4"/><path d="M2.500 0.8 L7.300 5.600 M7.500 2.300 V5.800 H4" fill="none" stroke="#c4c4c4" stroke-width="1.2"/></svg>
<svg class="abs" style="left:25.0px;top:196.5px" width="3" height="3" viewBox="0 0 3 3"><path d="M3 0 V3 H0 Z" fill="#c4c4c4"/></svg>
<div class="abs" style="left:5.5px;top:205.0px;width:22.5px;height:18px;background:#333;border-radius:2px"></div>
<div class="ui" style="left:10.5px;top:204.0px;font-family:'Liberation Serif',serif;font-size:17.5px;line-height:19px;color:#e8e8e8">T</div>
<svg class="abs" style="left:24.5px;top:218.5px" width="3" height="3" viewBox="0 0 3 3"><path d="M3 0 V3 H0 Z" fill="#c4c4c4"/></svg>
<svg class="abs" style="left:10.5px;top:228.0px" width="12" height="12" viewBox="0 0 12 12"><path d="M0.8 11.200 L11.200 0.8" stroke="#c4c4c4" stroke-width="1.1"/></svg>
<svg class="abs" style="left:9.5px;top:247.0px" width="14" height="14" viewBox="0 0 14 14"><path d="M8.200 0.8 L13 5.600 L10.8 7.200 L6.600 3 Z" fill="#c4c4c4"/><path d="M6.200 3.600 L10.200 7.600 L7.800 11 L1 13 L3 6.200 Z" fill="#c4c4c4"/><path d="M1 13 L5.400 8.600" stroke="#535353" stroke-width="0.9"/><circle cx="5.800" cy="8.200" r="1" fill="#535353"/></svg>
<svg class="abs" style="left:25.0px;top:259.0px" width="3" height="3" viewBox="0 0 3 3"><path d="M3 0 V3 H0 Z" fill="#c4c4c4"/></svg>
<svg class="abs" style="left:9.5px;top:267.0px" width="14" height="14" viewBox="0 0 14 14"><path d="M9.800 0.9 L13 4.100 L11.500 5.600 L8.300 2.400 Z M7.600 3.100 L10.800 6.300 L4.300 12.800 L0.800 13.200 L1.200 9.600 Z" fill="#c4c4c4"/></svg>
<svg class="abs" style="left:25.0px;top:279.0px" width="3" height="3" viewBox="0 0 3 3"><path d="M3 0 V3 H0 Z" fill="#c4c4c4"/></svg>
<svg class="abs" style="left:9.5px;top:288.0px" width="14" height="12" viewBox="0 0 14 12"><path d="M0.6 0.6 H13.400 V11.400 H0.6 Z M0.6 0.6 L13.400 11.400 M13.400 0.6 L0.6 11.400" fill="none" stroke="#c4c4c4" stroke-width="1"/></svg>
<svg class="abs" style="left:25.0px;top:299.0px" width="3" height="3" viewBox="0 0 3 3"><path d="M3 0 V3 H0 Z" fill="#c4c4c4"/></svg>
<svg class="abs" style="left:9.0px;top:308.0px" width="15" height="12" viewBox="0 0 15 12"><ellipse cx="7.500" cy="6" rx="6.800" ry="5.200" fill="none" stroke="#c4c4c4" stroke-width="1" opacity="0.75"/></svg>
<svg class="abs" style="left:25.0px;top:319.0px" width="3" height="3" viewBox="0 0 3 3"><path d="M3 0 V3 H0 Z" fill="#c4c4c4"/></svg>
<svg class="abs" style="left:9.5px;top:329.0px" width="14" height="13" viewBox="0 0 14 13"><circle cx="11" cy="2.800" r="2" fill="none" stroke="#c4c4c4" stroke-width="1.1"/><circle cx="11" cy="10.200" r="2" fill="none" stroke="#c4c4c4" stroke-width="1.1"/><path d="M9.300 3.800 L0.8 11.500 M9.300 9.200 L0.8 1.500" stroke="#c4c4c4" stroke-width="1.2" fill="none"/></svg>
<svg class="abs" style="left:9.0px;top:349.0px" width="16" height="13" viewBox="0 0 16 13"><path d="M0.5 0.5 V9.500 L3.200 6.800 H7.800 Z" fill="#c4c4c4"/><path d="M6.500 2 H14.500 V11.500 H4.500 V9.500" fill="none" stroke="#c4c4c4" stroke-width="0.9" stroke-dasharray="1.6 1.200"/><path d="M13.500 1 h2 v2 h-2z M13.500 10.500 h2 v2 h-2z M3.500 10.500 h2 v2 h-2z M8.500 10.500 h2 v2 h-2z M13.500 5.500 h2 v2 h-2z" fill="#c4c4c4"/></svg>
<svg class="abs" style="left:25.0px;top:361.0px" width="3" height="3" viewBox="0 0 3 3"><path d="M3 0 V3 H0 Z" fill="#c4c4c4"/></svg>
<div class="abs" style="left:9.5px;top:371.0px;width:14px;height:11px;border:1px solid #c4c4c4;background:linear-gradient(90deg,#d8d8d8,#3a3a3a)"></div>
<div class="abs" style="left:9.5px;top:391.0px;width:14px;height:11px;border:1px solid #c4c4c4;background:linear-gradient(90deg,rgba(83,83,83,0),#535353), repeating-conic-gradient(#cfcfcf 0% 25%, #666 0% 50%) 0 0/4px 4px"></div>
<svg class="abs" style="left:10.5px;top:412.5px" width="12" height="12" viewBox="0 0 12 12"><path d="M0.5 0.5 H11.500 V8.500 L8.500 11.500 H0.5 Z" fill="#c4c4c4"/><path d="M2.300 3 H9.700 M2.300 5.200 H9.700 M2.300 7.400 H7.500" stroke="#535353" stroke-width="0.9"/><path d="M8.500 11.500 V8.500 H11.500" fill="none" stroke="#535353" stroke-width="0.8"/></svg>
<svg class="abs" style="left:9.0px;top:432.0px" width="17" height="14" viewBox="0 0 17 14"><path d="M10 0.6 c1.200 -0.6 3 1 2.300 2.300 L10.800 4.400 L11.500 5.100 L10.500 6.100 L6.800 2.400 L7.800 1.400 L8.500 2.100 Z" fill="#c4c4c4"/><path d="M7.300 3.600 L2.300 8.600 L1.200 11.200 L1.800 11.800 L4.400 10.700 L9.400 5.700" fill="none" stroke="#c4c4c4" stroke-width="1"/><path d="M6.500 10.500 H15.500 V13.300 H6.500 Z" fill="none" stroke="#c4c4c4" stroke-width="0.9"/><path d="M8.500 11 v1.500 M10.500 11 v1.500 M12.500 11 v1.500" stroke="#c4c4c4" stroke-width="0.8"/></svg>
<svg class="abs" style="left:25.0px;top:444.5px" width="3" height="3" viewBox="0 0 3 3"><path d="M3 0 V3 H0 Z" fill="#c4c4c4"/></svg>
<svg class="abs" style="left:10.0px;top:452.0px" width="13" height="13" viewBox="0 0 13 13"><path d="M3.300 7 V2.600 c0 -1.100 1.500 -1.100 1.500 0 V1.500 c0 -1.100 1.600 -1.100 1.600 0 V2 c0 -1.100 1.600 -1.100 1.600 0 V3.300 c0 -1.100 1.500 -1.100 1.500 0 V9 c0 2.400 -1.400 3.600 -3.500 3.600 c-1.800 0 -2.600 -0.800 -3.600 -2.600 L0.800 7.400 c-0.400 -1 0.800 -1.600 1.400 -0.800 Z" fill="#c4c4c4"/></svg>
<svg class="abs" style="left:9.5px;top:472.0px" width="14" height="14" viewBox="0 0 14 14"><circle cx="5.600" cy="5.600" r="4.300" fill="none" stroke="#c4c4c4" stroke-width="1.1" opacity="0.85"/><path d="M8.800 8.800 L13 13" stroke="#c4c4c4" stroke-width="1.600"/></svg>
<svg class="abs" style="left:4.5px;top:493.0px" width="9" height="9" viewBox="0 0 9 9"><rect x="0.5" y="0.5" width="5.5" height="5.500" fill="#eee" stroke="#222" stroke-width="0.8"/><rect x="3" y="3" width="5.500" height="5.500" fill="#111" stroke="#eee" stroke-width="0.8"/></svg>
<svg class="abs" style="left:20.0px;top:494.0px" width="8" height="9" viewBox="0 0 8 9"><path d="M1.500 2.500 C5 1.500 6.500 4 5.800 7" fill="none" stroke="#c4c4c4" stroke-width="1.1"/><path d="M0 2.800 L3 0.5 L3 4.600 Z M4 6 L7.800 6 L5.800 9 Z" fill="#c4c4c4"/></svg>
<div class="abs" style="left:4.5px;top:508.0px;width:16px;height:16px;background:#fafafa;border:1px solid #ddd"></div>
<div class="ui" style="left:6.600000000000001px;top:507.0px;font-family:'Liberation Serif',serif;font-weight:bold;font-size:17px;line-height:17px;color:#000;-webkit-text-stroke:0.6px #000">T</div>
<svg class="abs" style="left:11.5px;top:515.0px" width="16" height="16" viewBox="0 0 16 16"><path d="M8.500 0.5 H15.500 V15.500 H0.5 V9" fill="#f6f6f6"/><path d="M9 0 H16 V16 H0 V9 H1 V15 H15 V1 H9 Z" fill="#f0f0f0"/><path d="M0.800 15.200 L15.200 0.8" stroke="#e0221b" stroke-width="1.5"/></svg>
<div class="abs" style="left:4.5px;top:508.0px;width:16px;height:16px;background:#fafafa;border:1px solid #ccc"></div>
<div class="ui" style="left:6.600000000000001px;top:507.29999999999995px;font-family:'Liberation Serif',serif;font-weight:bold;font-size:17px;line-height:17px;color:#000;-webkit-text-stroke:0.6px #000">T</div>
<div class="abs" style="left:7px;top:540.5px;width:6px;height:6px;border:1px solid #777"></div>
<div class="abs" style="left:18px;top:537.5px;width:10.500px;height:11.500px;background:#333;border-radius:1.500px"></div>
<div class="ui" style="left:20px;top:538.0px;font-family:'Liberation Serif',serif;font-weight:bold;font-size:10px;line-height:11px;color:#ccc">T</div>
<div class="abs" style="left:4.5px;top:554.0px;width:23.500px;height:18.500px;background:#3b3b3b;border-radius:2px"></div>
<div class="abs" style="left:9.5px;top:558.0px;width:14px;height:11px;background:#000;border:1px solid #555"></div>
<svg class="abs" style="left:24.5px;top:568.0px" width="3" height="3" viewBox="0 0 3 3"><path d="M3 0 V3 H0 Z" fill="#c4c4c4"/></svg>
<svg class="abs" style="left:11.0px;top:582.0px" width="11" height="9" viewBox="0 0 11 9"><path d="M0 0.5 H3 M0 0.5 V3" stroke="#c4c4c4" stroke-width="0.9" stroke-dasharray="1 1" fill="none"/><rect x="2.500" y="2" width="8" height="6.500" fill="#c4c4c4" opacity="0.8"/><path d="M0 1.500 h2 M0 3.500 h2 M0 5.500 h2 M3 0.500 h2 M6 0.500 h2" stroke="#c4c4c4" stroke-width="0.8" opacity="0.8"/></svg>
<div class="abs" style="left:4.5px;top:603.0px;width:23.500px;height:18px;background:#3e3e3e;border-radius:2px"></div>
<svg class="abs" style="left:11.5px;top:607.0px" width="10" height="9" viewBox="0 0 10 9"><rect x="0.5" y="0.5" width="9" height="8" fill="none" stroke="#c4c4c4" stroke-width="0.9"/><rect x="2.500" y="2.500" width="5" height="4" fill="none" stroke="#c4c4c4" stroke-width="0.8"/><rect x="4" y="3.500" width="3" height="2.500" fill="#c4c4c4"/></svg>
<svg class="abs" style="left:24.5px;top:617.5px" width="3" height="3" viewBox="0 0 3 3"><path d="M3 0 V3 H0 Z" fill="#c4c4c4"/></svg>
</div>
<div id="hr">
<svg class="abs" style="left:0;top:0" width="980" height="14"><path d="M30.10 0V14M63.58 0V14M97.06 0V14M130.54 0V14M164.02 0V14M197.50 0V14M230.98 0V14M264.46 0V14M297.94 0V14M331.42 0V14M364.90 0V14M398.38 0V14M431.86 0V14M465.34 0V14M498.82 0V14M532.30 0V14M565.78 0V14M599.26 0V14M632.74 0V14M666.22 0V14M699.70 0V14M733.18 0V14M766.66 0V14M800.14 0V14M833.62 0V14M867.10 0V14M900.58 0V14M934.06 0V14M967.54 0V14" stroke="#a0a0a0" stroke-width="0.9"/><path d="M16.71 10.2V14M23.40 10.2V14M36.80 10.2V14M43.49 10.2V14M50.19 10.2V14M56.88 10.2V14M70.28 10.2V14M76.97 10.2V14M83.67 10.2V14M90.36 10.2V14M103.76 10.2V14M110.45 10.2V14M117.15 10.2V14M123.84 10.2V14M137.24 10.2V14M143.93 10.2V14M150.63 10.2V14M157.32 10.2V14M170.72 10.2V14M177.41 10.2V14M184.11 10.2V14M190.80 10.2V14M204.20 10.2V14M210.89 10.2V14M217.59 10.2V14M224.28 10.2V14M237.68 10.2V14M244.37 10.2V14M251.07 10.2V14M257.76 10.2V14M271.16 10.2V14M277.85 10.2V14M284.55 10.2V14M291.24 10.2V14M304.64 10.2V14M311.33 10.2V14M318.03 10.2V14M324.72 10.2V14M338.12 10.2V14M344.81 10.2V14M351.51 10.2V14M358.20 10.2V14M371.60 10.2V14M378.29 10.2V14M384.99 10.2V14M391.68 10.2V14M405.08 10.2V14M411.77 10.2V14M418.47 10.2V14M425.16 10.2V14M438.56 10.2V14M445.25 10.2V14M451.95 10.2V14M458.64 10.2V14M472.04 10.2V14M478.73 10.2V14M485.43 10.2V14M492.12 10.2V14M505.52 10.2V14M512.21 10.2V14M518.91 10.2V14M525.60 10.2V14M539.00 10.2V14M545.69 10.2V14M552.39 10.2V14M559.08 10.2V14M572.48 10.2V14M579.17 10.2V14M585.87 10.2V14M592.56 10.2V14M605.96 10.2V14M612.65 10.2V14M619.35 10.2V14M626.04 10.2V14M639.44 10.2V14M646.13 10.2V14M652.83 10.2V14M659.52 10.2V14M672.92 10.2V14M679.61 10.2V14M686.31 10.2V14M693.00 10.2V14M706.40 10.2V14M713.09 10.2V14M719.79 10.2V14M726.48 10.2V14M739.88 10.2V14M746.57 10.2V14M753.27 10.2V14M759.96 10.2V14M773.36 10.2V14M780.05 10.2V14M786.75 10.2V14M793.44 10.2V14M806.84 10.2V14M813.53 10.2V14M820.23 10.2V14M826.92 10.2V14M840.32 10.2V14M847.01 10.2V14M853.71 10.2V14M860.40 10.2V14M873.80 10.2V14M880.49 10.2V14M887.19 10.2V14M893.88 10.2V14M907.28 10.2V14M913.97 10.2V14M920.67 10.2V14M927.36 10.2V14M940.76 10.2V14M947.45 10.2V14M954.15 10.2V14M960.84 10.2V14M974.24 10.2V14" stroke="#a4a4a4" stroke-width="0.8"/><path d="M20.06 11.8V14M26.75 11.8V14M33.45 11.8V14M40.14 11.8V14M46.84 11.8V14M53.54 11.8V14M60.23 11.8V14M66.93 11.8V14M73.62 11.8V14M80.32 11.8V14M87.02 11.8V14M93.71 11.8V14M100.41 11.8V14M107.10 11.8V14M113.80 11.8V14M120.50 11.8V14M127.19 11.8V14M133.89 11.8V14M140.58 11.8V14M147.28 11.8V14M153.98 11.8V14M160.67 11.8V14M167.37 11.8V14M174.06 11.8V14M180.76 11.8V14M187.46 11.8V14M194.15 11.8V14M200.85 11.8V14M207.54 11.8V14M214.24 11.8V14M220.94 11.8V14M227.63 11.8V14M234.33 11.8V14M241.02 11.8V14M247.72 11.8V14M254.42 11.8V14M261.11 11.8V14M267.81 11.8V14M274.50 11.8V14M281.20 11.8V14M287.90 11.8V14M294.59 11.8V14M301.29 11.8V14M307.98 11.8V14M314.68 11.8V14M321.38 11.8V14M328.07 11.8V14M334.77 11.8V14M341.46 11.8V14M348.16 11.8V14M354.86 11.8V14M361.55 11.8V14M368.25 11.8V14M374.94 11.8V14M381.64 11.8V14M388.34 11.8V14M395.03 11.8V14M401.73 11.8V14M408.42 11.8V14M415.12 11.8V14M421.82 11.8V14M428.51 11.8V14M435.21 11.8V14M441.90 11.8V14M448.60 11.8V14M455.30 11.8V14M461.99 11.8V14M468.69 11.8V14M475.38 11.8V14M482.08 11.8V14M488.78 11.8V14M495.47 11.8V14M502.17 11.8V14M508.86 11.8V14M515.56 11.8V14M522.26 11.8V14M528.95 11.8V14M535.65 11.8V14M542.34 11.8V14M549.04 11.8V14M555.74 11.8V14M562.43 11.8V14M569.13 11.8V14M575.82 11.8V14M582.52 11.8V14M589.22 11.8V14M595.91 11.8V14M602.61 11.8V14M609.30 11.8V14M616.00 11.8V14M622.70 11.8V14M629.39 11.8V14M636.09 11.8V14M642.78 11.8V14M649.48 11.8V14M656.18 11.8V14M662.87 11.8V14M669.57 11.8V14M676.26 11.8V14M682.96 11.8V14M689.66 11.8V14M696.35 11.8V14M703.05 11.8V14M709.74 11.8V14M716.44 11.8V14M723.14 11.8V14M729.83 11.8V14M736.53 11.8V14M743.22 11.8V14M749.92 11.8V14M756.62 11.8V14M763.31 11.8V14M770.01 11.8V14M776.70 11.8V14M783.40 11.8V14M790.10 11.8V14M796.79 11.8V14M803.49 11.8V14M810.18 11.8V14M816.88 11.8V14M823.58 11.8V14M830.27 11.8V14M836.97 11.8V14M843.66 11.8V14M850.36 11.8V14M857.06 11.8V14M863.75 11.8V14M870.45 11.8V14M877.14 11.8V14M883.84 11.8V14M890.54 11.8V14M897.23 11.8V14M903.93 11.8V14M910.62 11.8V14M917.32 11.8V14M924.02 11.8V14M930.71 11.8V14M937.41 11.8V14M944.10 11.8V14M950.80 11.8V14M957.50 11.8V14M964.19 11.8V14M970.89 11.8V14M977.58 11.8V14" stroke="#8c8c8c" stroke-width="0.7"/></svg>
<span class="rl" style="left:32.4px;top:0.9px">155</span>
<span class="rl" style="left:65.9px;top:0.9px">160</span>
<span class="rl" style="left:99.4px;top:0.9px">165</span>
<span class="rl" style="left:132.8px;top:0.9px">170</span>
<span class="rl" style="left:166.3px;top:0.9px">175</span>
<span class="rl" style="left:199.8px;top:0.9px">180</span>
<span class="rl" style="left:233.3px;top:0.9px">185</span>
<span class="rl" style="left:266.8px;top:0.9px">190</span>
<span class="rl" style="left:300.2px;top:0.9px">195</span>
<span class="rl" style="left:333.7px;top:0.9px">200</span>
<span class="rl" style="left:367.2px;top:0.9px">205</span>
<span class="rl" style="left:400.7px;top:0.9px">210</span>
<span class="rl" style="left:434.2px;top:0.9px">215</span>
<span class="rl" style="left:467.6px;top:0.9px">220</span>
<span class="rl" style="left:501.1px;top:0.9px">225</span>
<span class="rl" style="left:534.6px;top:0.9px">230</span>
<span class="rl" style="left:568.1px;top:0.9px">235</span>
<span class="rl" style="left:601.6px;top:0.9px">240</span>
<span class="rl" style="left:635.0px;top:0.9px">245</span>
<span class="rl" style="left:668.5px;top:0.9px">250</span>
<span class="rl" style="left:702.0px;top:0.9px">255</span>
<span class="rl" style="left:735.5px;top:0.9px">260</span>
<span class="rl" style="left:769.0px;top:0.9px">265</span>
<span class="rl" style="left:802.4px;top:0.9px">270</span>
<span class="rl" style="left:835.9px;top:0.9px">275</span>
<span class="rl" style="left:869.4px;top:0.9px">280</span>
<span class="rl" style="left:902.9px;top:0.9px">285</span>
<span class="rl" style="left:936.4px;top:0.9px">290</span>
<span class="rl" style="left:969.8px;top:0.9px">295</span>
<div class="abs" style="left:0;top:0;width:14px;height:14px;background:#1e1e1e"></div>
<svg class="abs" style="left:0;top:0" width="14" height="14"><path d="M4.500 0V14M0 4.500H14" stroke="#8a8a8a" stroke-width="0.7" stroke-dasharray="1 1"/><path d="M13.500 0V14" stroke="#8a8a8a" stroke-width="0.8"/></svg>
</div>
<div id="vr">
<svg class="abs" style="left:0;top:0" width="14" height="761"><path d="M0 14.60H14M0 48.08H14M0 81.56H14M0 115.04H14M0 148.52H14M0 182.00H14M0 215.48H14M0 248.96H14M0 282.44H14M0 315.92H14M0 349.40H14M0 382.88H14M0 416.36H14M0 449.84H14M0 483.32H14M0 516.80H14M0 550.28H14M0 583.76H14M0 617.24H14M0 650.72H14M0 684.20H14M0 717.68H14M0 751.16H14" stroke="#a0a0a0" stroke-width="0.9"/><path d="M10.2 1.21H14M10.2 7.90H14M10.2 21.30H14M10.2 27.99H14M10.2 34.69H14M10.2 41.38H14M10.2 54.78H14M10.2 61.47H14M10.2 68.17H14M10.2 74.86H14M10.2 88.26H14M10.2 94.95H14M10.2 101.65H14M10.2 108.34H14M10.2 121.74H14M10.2 128.43H14M10.2 135.13H14M10.2 141.82H14M10.2 155.22H14M10.2 161.91H14M10.2 168.61H14M10.2 175.30H14M10.2 188.70H14M10.2 195.39H14M10.2 202.09H14M10.2 208.78H14M10.2 222.18H14M10.2 228.87H14M10.2 235.57H14M10.2 242.26H14M10.2 255.66H14M10.2 262.35H14M10.2 269.05H14M10.2 275.74H14M10.2 289.14H14M10.2 295.83H14M10.2 302.53H14M10.2 309.22H14M10.2 322.62H14M10.2 329.31H14M10.2 336.01H14M10.2 342.70H14M10.2 356.10H14M10.2 362.79H14M10.2 369.49H14M10.2 376.18H14M10.2 389.58H14M10.2 396.27H14M10.2 402.97H14M10.2 409.66H14M10.2 423.06H14M10.2 429.75H14M10.2 436.45H14M10.2 443.14H14M10.2 456.54H14M10.2 463.23H14M10.2 469.93H14M10.2 476.62H14M10.2 490.02H14M10.2 496.71H14M10.2 503.41H14M10.2 510.10H14M10.2 523.50H14M10.2 530.19H14M10.2 536.89H14M10.2 543.58H14M10.2 556.98H14M10.2 563.67H14M10.2 570.37H14M10.2 577.06H14M10.2 590.46H14M10.2 597.15H14M10.2 603.85H14M10.2 610.54H14M10.2 623.94H14M10.2 630.63H14M10.2 637.33H14M10.2 644.02H14M10.2 657.42H14M10.2 664.11H14M10.2 670.81H14M10.2 677.50H14M10.2 690.90H14M10.2 697.59H14M10.2 704.29H14M10.2 710.98H14M10.2 724.38H14M10.2 731.07H14M10.2 737.77H14M10.2 744.46H14M10.2 757.86H14" stroke="#a4a4a4" stroke-width="0.8"/><path d="M11.8 4.56H14M11.8 11.25H14M11.8 17.95H14M11.8 24.64H14M11.8 31.34H14M11.8 38.04H14M11.8 44.73H14M11.8 51.43H14M11.8 58.12H14M11.8 64.82H14M11.8 71.52H14M11.8 78.21H14M11.8 84.91H14M11.8 91.60H14M11.8 98.30H14M11.8 105.00H14M11.8 111.69H14M11.8 118.39H14M11.8 125.08H14M11.8 131.78H14M11.8 138.48H14M11.8 145.17H14M11.8 151.87H14M11.8 158.56H14M11.8 165.26H14M11.8 171.96H14M11.8 178.65H14M11.8 185.35H14M11.8 192.04H14M11.8 198.74H14M11.8 205.44H14M11.8 212.13H14M11.8 218.83H14M11.8 225.52H14M11.8 232.22H14M11.8 238.92H14M11.8 245.61H14M11.8 252.31H14M11.8 259.00H14M11.8 265.70H14M11.8 272.40H14M11.8 279.09H14M11.8 285.79H14M11.8 292.48H14M11.8 299.18H14M11.8 305.88H14M11.8 312.57H14M11.8 319.27H14M11.8 325.96H14M11.8 332.66H14M11.8 339.36H14M11.8 346.05H14M11.8 352.75H14M11.8 359.44H14M11.8 366.14H14M11.8 372.84H14M11.8 379.53H14M11.8 386.23H14M11.8 392.92H14M11.8 399.62H14M11.8 406.32H14M11.8 413.01H14M11.8 419.71H14M11.8 426.40H14M11.8 433.10H14M11.8 439.80H14M11.8 446.49H14M11.8 453.19H14M11.8 459.88H14M11.8 466.58H14M11.8 473.28H14M11.8 479.97H14M11.8 486.67H14M11.8 493.36H14M11.8 500.06H14M11.8 506.76H14M11.8 513.45H14M11.8 520.15H14M11.8 526.84H14M11.8 533.54H14M11.8 540.24H14M11.8 546.93H14M11.8 553.63H14M11.8 560.32H14M11.8 567.02H14M11.8 573.72H14M11.8 580.41H14M11.8 587.11H14M11.8 593.80H14M11.8 600.50H14M11.8 607.20H14M11.8 613.89H14M11.8 620.59H14M11.8 627.28H14M11.8 633.98H14M11.8 640.68H14M11.8 647.37H14M11.8 654.07H14M11.8 660.76H14M11.8 667.46H14M11.8 674.16H14M11.8 680.85H14M11.8 687.55H14M11.8 694.24H14M11.8 700.94H14M11.8 707.64H14M11.8 714.33H14M11.8 721.03H14M11.8 727.72H14M11.8 734.42H14M11.8 741.12H14M11.8 747.81H14M11.8 754.51H14" stroke="#8c8c8c" stroke-width="0.7"/></svg>
<span class="rl" style="left:2px;top:-17.5px;width:6px;text-align:center">3</span>
<span class="rl" style="left:2px;top:-9.6px;width:6px;text-align:center">5</span>
<span class="rl" style="left:2px;top:16.0px;width:6px;text-align:center">4</span>
<span class="rl" style="left:2px;top:23.9px;width:6px;text-align:center">0</span>
<span class="rl" style="left:2px;top:49.5px;width:6px;text-align:center">4</span>
<span class="rl" style="left:2px;top:57.4px;width:6px;text-align:center">5</span>
<span class="rl" style="left:2px;top:83.0px;width:6px;text-align:center">5</span>
<span class="rl" style="left:2px;top:90.9px;width:6px;text-align:center">0</span>
<span class="rl" style="left:2px;top:116.4px;width:6px;text-align:center">5</span>
<span class="rl" style="left:2px;top:124.3px;width:6px;text-align:center">5</span>
<span class="rl" style="left:2px;top:149.9px;width:6px;text-align:center">6</span>
<span class="rl" style="left:2px;top:157.8px;width:6px;text-align:center">0</span>
<span class="rl" style="left:2px;top:183.4px;width:6px;text-align:center">6</span>
<span class="rl" style="left:2px;top:191.3px;width:6px;text-align:center">5</span>
<span class="rl" style="left:2px;top:216.9px;width:6px;text-align:center">7</span>
<span class="rl" style="left:2px;top:224.8px;width:6px;text-align:center">0</span>
<span class="rl" style="left:2px;top:250.4px;width:6px;text-align:center">7</span>
<span class="rl" style="left:2px;top:258.3px;width:6px;text-align:center">5</span>
<span class="rl" style="left:1.9px;top:283.3px;width:6px;text-align:center;transform:rotate(90deg)">8</span>
<span class="rl" style="left:1.9px;top:291.8px;width:6px;text-align:center;transform:rotate(90deg)">0</span>
<span class="rl" style="left:1.9px;top:316.8px;width:6px;text-align:center;transform:rotate(90deg)">8</span>
<span class="rl" style="left:1.9px;top:325.3px;width:6px;text-align:center;transform:rotate(90deg)">5</span>
<span class="rl" style="left:1.9px;top:350.3px;width:6px;text-align:center;transform:rotate(90deg)">9</span>
<span class="rl" style="left:1.9px;top:358.8px;width:6px;text-align:center;transform:rotate(90deg)">0</span>
<span class="rl" style="left:1.9px;top:383.8px;width:6px;text-align:center;transform:rotate(90deg)">9</span>
<span class="rl" style="left:1.9px;top:392.3px;width:6px;text-align:center;transform:rotate(90deg)">5</span>
<span class="rl" style="left:1.9px;top:417.3px;width:6px;text-align:center;transform:rotate(90deg)">1</span>
<span class="rl" style="left:1.9px;top:425.8px;width:6px;text-align:center;transform:rotate(90deg)">0</span>
<span class="rl" style="left:1.9px;top:434.3px;width:6px;text-align:center;transform:rotate(90deg)">0</span>
<span class="rl" style="left:1.9px;top:450.7px;width:6px;text-align:center;transform:rotate(90deg)">1</span>
<span class="rl" style="left:1.9px;top:459.2px;width:6px;text-align:center;transform:rotate(90deg)">0</span>
<span class="rl" style="left:1.9px;top:467.7px;width:6px;text-align:center;transform:rotate(90deg)">5</span>
<span class="rl" style="left:1.9px;top:484.2px;width:6px;text-align:center;transform:rotate(90deg)">1</span>
<span class="rl" style="left:1.9px;top:492.7px;width:6px;text-align:center;transform:rotate(90deg)">1</span>
<span class="rl" style="left:1.9px;top:501.2px;width:6px;text-align:center;transform:rotate(90deg)">0</span>
<span class="rl" style="left:1.9px;top:517.7px;width:6px;text-align:center;transform:rotate(90deg)">1</span>
<span class="rl" style="left:1.9px;top:526.2px;width:6px;text-align:center;transform:rotate(90deg)">1</span>
<span class="rl" style="left:1.9px;top:534.7px;width:6px;text-align:center;transform:rotate(90deg)">5</span>
<span class="rl" style="left:1.9px;top:551.2px;width:6px;text-align:center;transform:rotate(90deg)">1</span>
<span class="rl" style="left:1.9px;top:559.7px;width:6px;text-align:center;transform:rotate(90deg)">2</span>
<span class="rl" style="left:1.9px;top:568.2px;width:6px;text-align:center;transform:rotate(90deg)">0</span>
<span class="rl" style="left:1.9px;top:584.7px;width:6px;text-align:center;transform:rotate(90deg)">1</span>
<span class="rl" style="left:1.9px;top:593.2px;width:6px;text-align:center;transform:rotate(90deg)">2</span>
<span class="rl" style="left:1.9px;top:601.7px;width:6px;text-align:center;transform:rotate(90deg)">5</span>
<span class="rl" style="left:1.9px;top:618.1px;width:6px;text-align:center;transform:rotate(90deg)">1</span>
<span class="rl" style="left:1.9px;top:626.6px;width:6px;text-align:center;transform:rotate(90deg)">3</span>
<span class="rl" style="left:1.9px;top:635.1px;width:6px;text-align:center;transform:rotate(90deg)">0</span>
<span class="rl" style="left:1.9px;top:651.6px;width:6px;text-align:center;transform:rotate(90deg)">1</span>
<span class="rl" style="left:1.9px;top:660.1px;width:6px;text-align:center;transform:rotate(90deg)">3</span>
<span class="rl" style="left:1.9px;top:668.6px;width:6px;text-align:center;transform:rotate(90deg)">5</span>
<span class="rl" style="left:1.9px;top:685.1px;width:6px;text-align:center;transform:rotate(90deg)">1</span>
<span class="rl" style="left:1.9px;top:693.6px;width:6px;text-align:center;transform:rotate(90deg)">4</span>
<span class="rl" style="left:1.9px;top:702.1px;width:6px;text-align:center;transform:rotate(90deg)">0</span>
<span class="rl" style="left:1.9px;top:718.6px;width:6px;text-align:center;transform:rotate(90deg)">1</span>
<span class="rl" style="left:1.9px;top:727.1px;width:6px;text-align:center;transform:rotate(90deg)">4</span>
<span class="rl" style="left:1.9px;top:735.6px;width:6px;text-align:center;transform:rotate(90deg)">5</span>
</div>
<style>
.ln{position:absolute;white-space:nowrap;font-family:"Liberation Serif",serif;font-size:22.44px;line-height:30px;color:#000;-webkit-text-stroke:0.18px #000}
.ln.h{font-size:18.9px}
.ln u{text-decoration:none;background:radial-gradient(circle at 50% 63%,#96a6c6 0.7px,rgba(150,166,198,0) 1.25px)}
.sc{font-size:18.5px}
.sc2{font-size:18.5px;letter-spacing:0.85px}
.hc{color:#5b9cf5;-webkit-text-stroke:0}
.ts{font-size:0.45em;background:radial-gradient(circle at 50% 55%,#7aa4e8 0.65px,rgba(122,164,232,0) 1.25px)}
.ln i{letter-spacing:0.3px}
.ln.it5 i{letter-spacing:0.5px}
.ln.it7 i{letter-spacing:0.65px}
.ln.h i{letter-spacing:inherit}
.hat{font-size:0.62em;position:relative;top:-0.33em;font-family:"Liberation Sans",sans-serif;display:inline-block;width:4.6px;text-align:center;letter-spacing:0;text-indent:-1.2px;color:#6fa6f2}
</style>
<div id="page">
<svg class="abs" style="left:0;top:0" width="960" height="748"><path d="M123.8 24.56H806.5M123.8 50.54H806.5M123.8 76.52H806.5M123.8 102.50H806.5M123.8 128.48H806.5M123.8 154.46H806.5M123.8 180.44H806.5M123.8 206.42H806.5M123.8 232.40H806.5M123.8 258.38H806.5M123.8 284.36H806.5M123.8 310.34H806.5M123.8 336.32H806.5M123.8 362.30H806.5M123.8 388.28H806.5M123.8 414.26H806.5M123.8 440.24H806.5M123.8 466.22H806.5M123.8 492.20H806.5M123.8 518.18H806.5M123.8 544.16H806.5M123.8 570.14H806.5M123.8 596.12H806.5M123.8 622.10H806.5M123.8 648.08H806.5M123.8 674.06H806.5M123.8 700.04H806.5M123.8 726.02H806.5" stroke="#c3c3cb" stroke-width="0.85"/><path d="M123.1 0V748" stroke="#b59ad6" stroke-width="1.6"/><path d="M806.6 0V748" stroke="#a48ccf" stroke-width="1.1"/></svg>
<svg class="abs" style="left:434px;top:31px" width="110" height="145" viewBox="530 170 110 145"><path fill="#000" d="M536.4 178.3H584.9V180.7C575.500 181.300 568.400 182.800 568.400 192.500V276.700C568.400 286.400 575.500 287.900 584.900 288.500V290.900H536.400V288.500C545.800 287.900 552.400 286.400 552.400 276.700V192.500C552.400 182.800 545.800 181.300 536.400 180.700Z"/><path fill="#5a9af4" d="M607.1 194.3H632.9V309.4H624.9V200.6H615.7V309.4H607.1V248.6C591 248.6 581.9 236.500 581.9 221.500C581.9 206.500 591 194.3 607.1 194.3Z"/></svg>
<svg class="abs" style="left:123.5px;top:346.1px" width="114.5" height="171" viewBox="0 0 114.5 171">
<defs>
<filter id="pn" x="0" y="0" width="100%" height="100%"><feTurbulence type="fractalNoise" baseFrequency="0.95" numOctaves="2" seed="7" result="t"/><feColorMatrix in="t" type="matrix" values="0 0 0 0 0  0 0 0 0 0  0 0 0 0 0  1.6 1.6 0 0 -1.25"/></filter>
<filter id="pw" x="0" y="0" width="100%" height="100%"><feTurbulence type="fractalNoise" baseFrequency="0.8" numOctaves="2" seed="3" result="t"/><feColorMatrix in="t" type="matrix" values="0 0 0 0 1  0 0 0 0 1  0 0 0 0 1  1.6 1.6 0 0 -1.35"/></filter>
<filter id="pb" x="-10%" y="-10%" width="120%" height="120%"><feGaussianBlur stdDeviation="1.15"/></filter>
<filter id="pb2" x="-20%" y="-20%" width="140%" height="140%"><feGaussianBlur stdDeviation="2.4"/></filter>
<linearGradient id="pfade" x1="0" y1="0" x2="0" y2="1"><stop offset="0.86" stop-color="#fff" stop-opacity="0"/><stop offset="0.965" stop-color="#fff" stop-opacity="0.97"/></linearGradient>
<linearGradient id="phair" x1="0" y1="0" x2="1" y2="0.3"><stop offset="0" stop-color="#262628"/><stop offset="0.55" stop-color="#303032"/><stop offset="1" stop-color="#4a4a4c"/></linearGradient>
<clipPath id="pc"><rect x="0" y="0" width="114.5" height="171"/></clipPath>
</defs>
<g clip-path="url(#pc)">
<rect x="0" y="0" width="114.5" height="171" fill="#d1d1d3"/>
<g filter="url(#pb2)">
<ellipse cx="104" cy="40" rx="14" ry="34" fill="#d6d6d8"/>
<ellipse cx="10" cy="70" rx="12" ry="50" fill="#c1c1c3"/>
</g>
<g filter="url(#pb)">
<!-- suit base -->
<path d="M2 171 L7 141 C10 130 14 124 20 120 L44 109 L47 112 L54 143 L62 127 L88 85 L98 99 L112 106 L116 110 L116 171 Z" fill="#777779"/>
<!-- left side darker -->
<path d="M7 141 C10 130 14 124 20 120 L44 109 L40 137 L36 171 L2 171 Z" fill="#68686a"/>
<path d="M44 109 L47 112 L41 137 L47 156 L44 171 L34 171 L38 140 Z" fill="#3e3e40"/>
<path d="M14 128 L18 150 M26 122 L24 160" stroke="#545456" stroke-width="1.400" fill="none"/>
<!-- right lapel -->
<path d="M88 85 L97.500 100.500 L95 124 L78.500 132.700 L83 141.600 L46 171 L54 143 L62 127 Z" fill="#848486"/>
<path d="M88 85 L97.500 100.500 L95 124 L78.500 132.700 L83 141.600 L50 168" fill="none" stroke="#3e3e40" stroke-width="1.300"/>
<path d="M97.500 100.500 L112 106" stroke="#4a4a4c" stroke-width="1.200"/>
<path d="M100 110 L104 165" stroke="#5a5a5c" stroke-width="1.200"/>
<path d="M62 127 L88 85" stroke="#48484a" stroke-width="1.600"/>
<!-- shirt -->
<path d="M46.200 109.300 L47 101 L86 84 L87.500 87 L62 127 L54 143 L50 128 Z" fill="#f6f6f8"/>
<path d="M55 115 L61.700 127 L87 88" fill="none" stroke="#bdbdbf" stroke-width="0.900"/>
<!-- tie -->
<path d="M49 116 L56 113.500 L58 121.500 L53 143.500 L47.300 156 L40.600 137 L46 122 Z" fill="#3a3a3c"/>
<path d="M49 116 L56 113.500 L58 121.500 L50 124 Z" fill="#2a2a2c"/>
<path d="M48 126 L46 150" stroke="#6a6a6c" stroke-width="1"/>
<!-- neck -->
<path d="M46 98 L84 72 L86.500 85 L56 113 L47 111 Z" fill="#b4b4b6"/>
<path d="M45 100 C54 107 69 101 81 82 L85 74 L78 76 L50 96 Z" fill="#5e5e60"/>
<!-- face -->
<path d="M27 34 C26 42 26.500 50 27.500 58 C28.500 66 31 74 35 84 C38 91 42 96 47.300 98.500 C51 100.500 57 101 61 99.500 C68 97 74 92 78 86 C82 79 84.500 72 85 64 L85 50 L80 30 L60 20 L36 24 Z" fill="#e1e1e3"/>
<!-- right cheek shade -->
<path d="M85 52 L85 64 C84.500 72 82 79 78 86 C74 92 68 97 61 99.500 C57 101 51 100.500 47.300 98.500 C58 97 69 90 74 80 C78 72 80 62 79.500 54 C79.500 48 81 46 83 47 Z" fill="#9c9c9e" opacity="0.85"/>
<path d="M27.500 58 C28.500 66 31 74 35 84 C38 91 42 96 47.300 98.500 C42 92 38 84 36 76 C34 70 33 64 33 58 Z" fill="#b6b6b8" opacity="0.85"/>
<!-- ear -->
<path d="M84 52 C88 48 96 48 97 54 C98 62 94 71 88 74 L84 74 Z" fill="#d4d4d6"/>
<path d="M88 55 C92 53 94 56 93 61 C92 66 90 69 87.500 70" fill="none" stroke="#6e6e70" stroke-width="1.500"/>
<!-- forehead highlight -->
<path d="M32 30 C42 25 58 24 70 30 L74 42 C62 36 44 36 31 42 Z" fill="#f0f0f2" opacity="0.85"/>
<!-- hair -->
<path d="M27 35 C26 26 30 18 36 13 C42 8 50 6 58 6.500 C66 7 74 9.500 80 14 C88 20 93 28 94 38 C94.500 44 92 49 87.500 52 L83 52 C82 44 80 38 76.500 34 C73 29 70 26 67.500 23.500 C62 22 54 23 48 24 C40 25 33 28 27 35 Z" fill="url(#phair)"/>
<path d="M69 13 C76 17 84 25 87 36 C88 42 88 47 86 51 C84 42 80 33 74 27 C71 24 69 20 69 13 Z" fill="#5c5c5e" opacity="0.8"/>
<path d="M69 12 C68 16 67 20 67.500 23.500" stroke="#8a8a8c" stroke-width="1" fill="none"/>
<!-- brows -->
<path d="M26.500 50 C30 45.500 36 44 42 45 L42 48.800 C36 48 31 49 27.200 52.500 Z" fill="#343436"/>
<path d="M51 46 C56 43.500 64 43.200 70.500 44.700 C73 45.500 75.500 47 77 49 L75.500 50 C72 48.500 64 47.500 57 48.200 C55 48.500 53 49 51.500 49.500 Z" fill="#343436"/>
<!-- eyes -->
<ellipse cx="34.500" cy="53" rx="6" ry="4" fill="#9a9a9c"/><ellipse cx="34.500" cy="53.400" rx="4.600" ry="2.300" fill="#2c2c2e"/>
<ellipse cx="60" cy="52" rx="7" ry="4.200" fill="#9a9a9c"/><ellipse cx="60" cy="52.300" rx="5.400" ry="2.500" fill="#2c2c2e"/>
<path d="M29 56.500 C33 58.500 38 58.500 41 56.500" fill="none" stroke="#a0a0a2" stroke-width="1.100"/>
<path d="M54 56 C58 58.500 64 58 68 55.500" fill="none" stroke="#a0a0a2" stroke-width="1.100"/>
<!-- nose -->
<path d="M47.500 49 C46 56 42 64 39 70 C39 73 42 74.500 45 74 C48 73.500 51 72 51 70 C49.500 66 49 58 50 49 Z" fill="#bcbcbe"/>
<path d="M45 50 C44 58 41 65 39.200 70.500" fill="none" stroke="#f4f4f6" stroke-width="1.600"/>
<path d="M39.500 72.500 C42 75 47 75 51 72" fill="none" stroke="#4e4e50" stroke-width="1.400"/>
<path d="M50 56 C51 62 51.500 68 52.500 73 L56 70 C54 64 53 60 53 56 Z" fill="#b0b0b2" opacity="0.8"/>
<!-- mouth -->
<path d="M40.500 81.300 C46 80 52 80.300 59 82" fill="none" stroke="#404042" stroke-width="1.700"/>
<path d="M43 85.500 C47 87.500 52 87.500 56 86" fill="none" stroke="#9a9a9c" stroke-width="1.600"/>
<path d="M44 91 C48 93 54 93 58 91" fill="none" stroke="#c8c8ca" stroke-width="1.200"/>
</g>
<rect x="0" y="0" width="114.5" height="171" filter="url(#pn)" opacity="0.15"/>
<rect x="0" y="0" width="114.5" height="171" filter="url(#pw)" opacity="0.2"/>
<rect x="0" y="0" width="114.5" height="171" fill="url(#pfade)"/>
</g>
<rect x="0.4" y="0.4" width="113.7" height="170.2" fill="none" stroke="#a9c6ee" stroke-width="0.9"/>
</svg>
<svg class="abs" style="left:128.5px;top:342.8px" width="13" height="6" viewBox="0 0 13 6"><rect x="0.3" y="0.3" width="12.4" height="5.400" rx="2.700" fill="#3f7fe0"/><path d="M3 3h2.500M7.500 3h2.500" stroke="#fff" stroke-width="1.300" stroke-linecap="round"/><path d="M5 3h3" stroke="#fff" stroke-width="0.8"/></svg>
<div class="ln h" id="l0" style="left:124.00px;top:263.38px;word-spacing:0.000px;letter-spacing:0.545px"><b>IRVINE</b></div>
<div class="ln h" id="l1" style="left:203.00px;top:263.38px;word-spacing:0.000px;letter-spacing:1.278px"><b>(Samuel,</b></div>
<div class="ln h" id="l2" style="left:289.40px;top:263.38px;word-spacing:0.000px;letter-spacing:0.848px"><b>Rodman,</b></div>
<div class="ln h" id="l3" style="left:375.40px;top:263.38px;word-spacing:0.000px;letter-spacing:0.888px"><b>«</b></div>
<div class="ln h" id="l4" style="left:390.90px;top:263.38px;word-spacing:0.000px;letter-spacing:0.498px"><b>Rod</b></div>
<div class="ln h" id="l5" style="left:429.80px;top:263.38px;word-spacing:0.000px;letter-spacing:1.856px"><b>»)</b></div>
<div class="ln h" id="l6" style="left:449.20px;top:263.38px;word-spacing:0.000px;letter-spacing:0.019px"><span class="hc hat">^</span></div>
<div class="ln h" id="l7" style="left:457.40px;top:263.38px;word-spacing:0.000px;letter-spacing:-0.009px">–</div>
<div class="ln h" id="l8" style="left:468.20px;top:263.38px;word-spacing:0.000px;letter-spacing:0.019px"><span class="hc hat">^</span></div>
<div class="ln h" id="l9" style="left:474.50px;top:263.38px;word-spacing:0.000px;letter-spacing:1.411px"><i>ophtalmologiste</i></div>
<div class="ln h" id="l10" style="left:623.50px;top:263.38px;word-spacing:0.000px;letter-spacing:1.448px"><i>américain</i></div>
<div class="ln h" id="l11" style="left:124.30px;top:289.36px;word-spacing:0.000px;letter-spacing:0.276px"><i>(1906-1999)</i></div>
<div class="ln " id="l12" style="left:251.00px;top:340.20px;word-spacing:2.407px;letter-spacing:0.000px">Diplômé<u> </u>de<u> </u>l’Université<u> </u>de<u> </u>Standord<u> </u>en<u> </u>1928,<u> </u>il<u> </u>soutient<u> </u>sa</div>
<div class="ln " id="l13" style="left:251.00px;top:366.18px;word-spacing:1.913px;letter-spacing:0.000px">thèse<u> </u>en<u> </u>médecine<u> </u>à<u> </u>Harvard<u> </u>en<u> </u>1932,<u> </u>puis<u> </u>complète<u> </u>sa<u> </u>for-</div>
<div class="ln it5" id="l14" style="left:251.00px;top:392.16px;word-spacing:0.169px;letter-spacing:0.000px">mation<u> </u>en<u> </u>ophtalmologie<u> </u>en<u> </u>1936<u> </u>au<u> </u><i>Massachusetts<u> </u>Eye<u> </u>and</i></div>
<div class="ln " id="l15" style="left:251.00px;top:418.14px;word-spacing:2.308px;letter-spacing:0.188px"><i>Ear<u> </u>Infirmary</i>.<u> </u>À<u> </u>la<u> </u>fin<u> </u>des<u> </u>années<u> </u>1950,<u> </u>il<u> </u>s’intéresse<u> </u>aux</div>
<div class="ln " id="l16" style="left:251.00px;top:444.12px;word-spacing:0.348px;letter-spacing:0.000px">décollements<u> </u>de<u> </u>rétine<u> </u>et<u> </u>à<u> </u>leur<u> </u>traitement<u> </u>par<u> </u>diathermie,<u> </u>an-</div>
<div class="ln " id="l17" style="left:251.00px;top:470.10px;word-spacing:0.340px;letter-spacing:0.000px">cêtre<u> </u>du<u> </u>laser.<u> </u>À<u> </u>la<u> </u>même<u> </u>période,<u> </u>il<u> </u>est<u> </u>professeur<u> </u>associé<u> </u>au</div>
<div class="ln it7" id="l18" style="left:251.00px;top:496.08px;word-spacing:4.266px;letter-spacing:0.157px"><i>Wilmer<u> </u>Ophthalmological<u> </u>Institute</i><u> </u>de<u> </u>l’Université<u> </u>Johns</div>
<div class="ln " id="l19" style="left:124.30px;top:522.06px;word-spacing:0.984px;letter-spacing:0.000px">Hopkins<u> </u>où<u> </u>il<u> </u>est,<u> </u>entre<u> </u>autres,<u> </u>chargé<u> </u>de<u> </u>l’enseignement<u> </u>de<u> </u>l’optique<u> </u>et<u> </u>de</div>
<div class="ln " id="l20" style="left:124.30px;top:548.04px;word-spacing:0.972px;letter-spacing:0.000px">la<u> </u>réfraction<u> </u>pour<u> </u>les<u> </u>internes<u> </u>en<u> </u>ophtalmologie<u> </u>et<u> </u>les<u> </u>étudiants<u> </u>en<u> </u>optomé-</div>
<div class="ln " id="l21" style="left:124.30px;top:574.02px;word-spacing:1.406px;letter-spacing:0.000px">trie<u> </u>et<u> </u>orthoptie.<u> </u>Il<u> </u>y<u> </u>développe<u> </u>un<u> </u>test<u> </u>prismatique<u> </u>de<u> </u>dépistage<u> </u>des<u> </u>micro</div>
<div class="ln " id="l22" style="left:124.30px;top:600.00px;word-spacing:1.954px;letter-spacing:0.000px">déviation<u> </u>strabique,<u> </u>popularisé<u> </u>ensuite<u> </u>par<u> </u><span class=sc>JAMPOLSKY</span><u> </u>(voir<u> </u>ci-dessous).</div>
<div class="ln " id="l23" style="left:124.30px;top:651.96px;word-spacing:3.827px;letter-spacing:0.212px"><span class=sc2>SYNDROME<u> </u>DE<u> </u>IRVINE-GASS</span><span class="hc hat">^</span>–<span class="hc hat">^</span>En<u> </u>1952,<u> </u>Irvine<u> </u>décrit<u> </u>un<u> </u>nouveau<u> </u>syn-</div>
<div class="ln " id="l24" style="left:124.30px;top:677.94px;word-spacing:2.493px;letter-spacing:0.231px">drome<u> </u>secondaire<u> </u>à<u> </u>une<u> </u>chirurgie<u> </u>de<u> </u>la<u> </u>cataracte<u> </u>qui<u> </u>est<u> </u>un<u> </u>œdème<u> </u>ma-</div>
<div class="ln " id="l25" style="left:124.30px;top:703.92px;word-spacing:2.508px;letter-spacing:0.000px">culaire<u> </u>cystoïde.<u> </u>Il<u> </u>porte<u> </u>depuis<u> </u>son<u> </u>nom,<u> </u>associé<u> </u>à<u> </u>celui<u> </u>de<u> </u>John<u> </u>Donald</div>
<div class="ln " id="l26" style="left:124.30px;top:729.90px;word-spacing:0.727px;letter-spacing:0.000px">MacIntyre<u> </u><span class=sc>GASS</span>,<u> </u>qui<u> </u>a<u> </u>en<u> </u>précisé<u> </u>la<u> </u>description.</div>
<div class="abs" style="left:197.7px;top:279.3px;width:1.8px;height:1.8px;border-radius:50%;background:#8db0ea"></div>
<div class="abs" style="left:285.2px;top:279.3px;width:1.8px;height:1.8px;border-radius:50%;background:#8db0ea"></div>
<div class="abs" style="left:371.1px;top:279.3px;width:1.8px;height:1.8px;border-radius:50%;background:#8db0ea"></div>
<div class="abs" style="left:387.2px;top:279.3px;width:1.8px;height:1.8px;border-radius:50%;background:#8db0ea"></div>
<div class="abs" style="left:426.7px;top:279.3px;width:1.8px;height:1.8px;border-radius:50%;background:#8db0ea"></div>
<div class="abs" style="left:618.8px;top:279.3px;width:1.8px;height:1.8px;border-radius:50%;background:#8db0ea"></div>
<div class="abs" style="left:715.4px;top:279.3px;width:1.8px;height:1.8px;border-radius:50%;background:#8db0ea"></div>
<div class="ln hc" style="left:222.5px;top:289.36px;font-size:18.9px;color:#5b9cf5">¶</div>
<div class="ln hc" style="left:794.5px;top:600.45px;font-size:21px;color:#5b9cf5">¶</div>
<div class="ln hc" style="left:561.5px;top:730.35px;font-size:21px;color:#5b9cf5">¶</div>
<svg class="abs" style="left:799.5px;top:374.7px" width="8" height="4" viewBox="0 0 8 4"><path d="M0.5 1.500C2 0.3 3.500 1 4.500 1.800C5.500 2.600 6.500 2.600 7.500 2" fill="none" stroke="#7fa8e8" stroke-width="0.9"/></svg>
<svg class="abs" style="left:799.5px;top:452.6px" width="8" height="4" viewBox="0 0 8 4"><path d="M0.5 1.500C2 0.3 3.500 1 4.500 1.800C5.500 2.600 6.500 2.600 7.500 2" fill="none" stroke="#7fa8e8" stroke-width="0.9"/></svg>
<svg class="abs" style="left:799.5px;top:556.5px" width="8" height="4" viewBox="0 0 8 4"><path d="M0.5 1.500C2 0.3 3.500 1 4.500 1.800C5.500 2.600 6.500 2.600 7.500 2" fill="none" stroke="#7fa8e8" stroke-width="0.9"/></svg>
<svg class="abs" style="left:799.5px;top:660.5px" width="8" height="4" viewBox="0 0 8 4"><path d="M0.5 1.500C2 0.3 3.500 1 4.500 1.800C5.500 2.600 6.500 2.600 7.500 2" fill="none" stroke="#7fa8e8" stroke-width="0.9"/></svg>
<svg class="abs" style="left:799.5px;top:686.4px" width="8" height="4" viewBox="0 0 8 4"><path d="M0.5 1.500C2 0.3 3.500 1 4.500 1.800C5.500 2.600 6.500 2.600 7.500 2" fill="none" stroke="#7fa8e8" stroke-width="0.9"/></svg>
<div class="abs" style="left:630.6px;top:549px;width:1.1px;height:24px;background:#222"></div>
</div>
<div class="abs" style="left:1056.6px;top:139px;width:2.2px;height:748px;background:#0a0a0a"></div>
<div class="abs" style="left:1058.8px;top:139px;width:4px;height:748px;background:#555"></div>
<div id="status">
<span class="abs" style="left:12.5px;top:1.5px;line-height:12px">200 %</span>
<svg class="abs" style="left:47.5px;top:5.5px" width="7" height="5" viewBox="0 0 7 5"><path d="M0.6 0.6 L3.5 4 L6.4 0.6" fill="none" stroke="#d0d0d0" stroke-width="1.2"/></svg>
<svg class="abs" style="left:64px;top:3.5px" width="7" height="8" viewBox="0 0 7 8"><path d="M0.600 0V8" stroke="#cfcfcf" stroke-width="1.2"/><path d="M6.500 0.3V7.700L1.800 4Z" fill="#cfcfcf"/></svg>
<svg class="abs" style="left:83px;top:3.5px" width="6" height="8" viewBox="0 0 6 8"><path d="M5 0.3V7.700L0.5 4Z" fill="#cfcfcf"/></svg>
<div class="abs" style="left:99px;top:0.5px;width:71.500px;height:14px;background:#3f3f3f;border:1px solid #676767;border-radius:1.5px"><span class="abs" style="left:3.5px;top:0.5px;line-height:12px">91</span><i class="abs" style="left:60.500px;top:0;width:1px;height:13px;background:#676767"></i></div>
<svg class="abs" style="left:162.0px;top:5.5px" width="7" height="5" viewBox="0 0 7 5"><path d="M0.6 0.6 L3.5 4 L6.4 0.6" fill="none" stroke="#d0d0d0" stroke-width="1.2"/></svg>
<svg class="abs" style="left:184px;top:3.5px" width="6" height="8" viewBox="0 0 6 8"><path d="M1 0.3V7.700L5.500 4Z" fill="#cfcfcf"/></svg>
<svg class="abs" style="left:200px;top:3.5px" width="7" height="8" viewBox="0 0 7 8"><path d="M6.400 0V8" stroke="#cfcfcf" stroke-width="1.2"/><path d="M0.5 0.3V7.700L5.200 4Z" fill="#cfcfcf"/></svg>
<svg class="abs" style="left:220px;top:2.5px" width="12" height="10" viewBox="0 0 12 10"><path d="M1.500 8 V4.500 C1.500 1 8.500 1 8.500 4.500 V8" fill="none" stroke="#cfcfcf" stroke-width="1.800" opacity="0.85"/><circle cx="10.800" cy="8.800" r="0.8" fill="#cfcfcf"/></svg>
<span class="abs" style="left:248px;top:1.5px;line-height:12px;font-size:8.9px">[Standard] (de tra...</span>
<svg class="abs" style="left:333.0px;top:5.5px" width="7" height="5" viewBox="0 0 7 5"><path d="M0.6 0.6 L3.5 4 L6.4 0.6" fill="none" stroke="#d0d0d0" stroke-width="1.2"/></svg>
<div class="abs" style="left:353.5px;top:3.5px;width:7.500px;height:7.500px;border-radius:50%;background:#2fb344"></div>
<span class="abs" style="left:366.5px;top:1.5px;line-height:12px;font-size:8.9px">Aucune erreur</span>
<svg class="abs" style="left:427.5px;top:5.5px" width="7" height="5" viewBox="0 0 7 5"><path d="M0.6 0.6 L3.5 4 L6.4 0.6" fill="none" stroke="#d0d0d0" stroke-width="1.2"/></svg>
<div class="abs" style="left:854px;top:1.5px;width:140px;height:13px;border-radius:6.500px;background:#6b6a6c"></div>
</div>

</body></html>
